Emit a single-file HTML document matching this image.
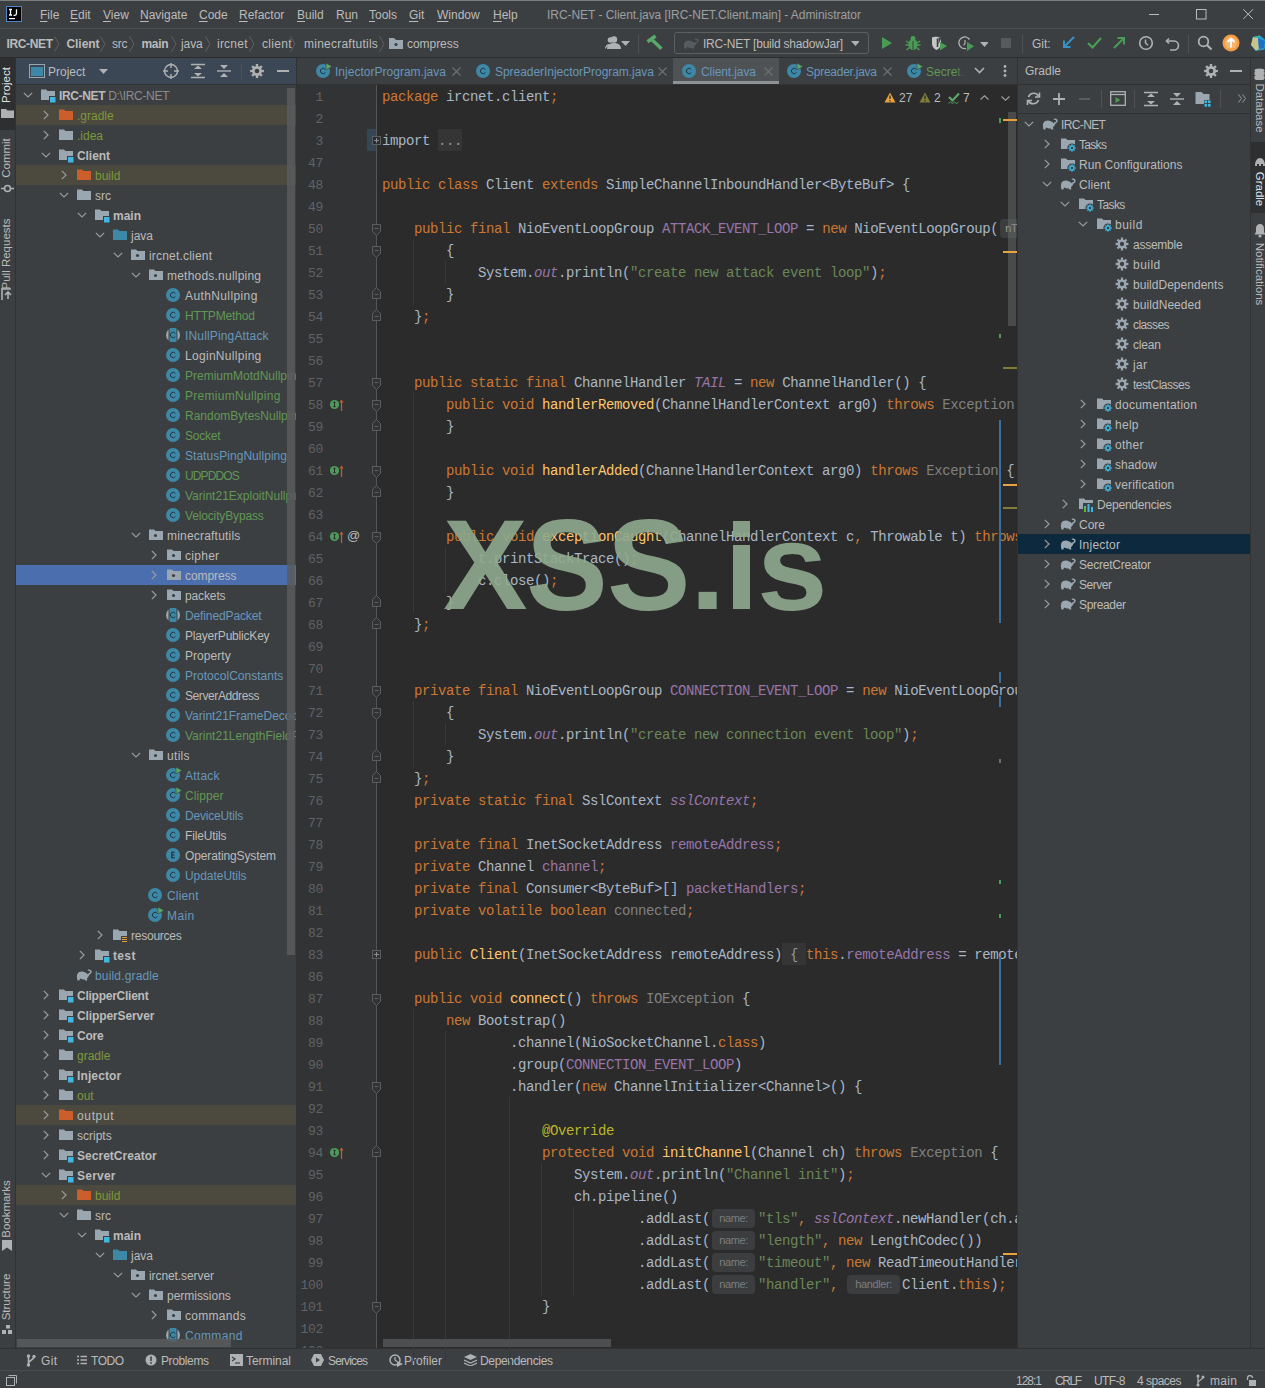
<!DOCTYPE html><html><head><meta charset="utf-8"><style>
*{margin:0;padding:0;box-sizing:border-box}
html,body{width:1265px;height:1388px;overflow:hidden;background:#3c3f41}
body{position:relative;font-family:"Liberation Sans",sans-serif;font-size:12px;color:#bbbbbb}
div,svg{position:absolute}
.t{white-space:pre;line-height:16px}
.code{font-family:"Liberation Mono",monospace;font-size:14px;letter-spacing:-0.4px;white-space:pre;line-height:22px;color:#a9b7c6;height:22px}
.k{color:#cc7832}.s{color:#6a8759}.fi{color:#9876aa;font-style:italic}.f{color:#9876aa}.m{color:#ffc66d}
.an{color:#bbb529}.g{color:#808080}.ln{font-family:"Liberation Mono",monospace;font-size:13px;letter-spacing:-0.3px;color:#606366;text-align:right;width:40px;line-height:22px}
.hint{display:inline-block;font-family:"Liberation Sans",sans-serif;font-size:11px;color:#7a7e80;background:#3b3d3f;border-radius:4px;line-height:19px;vertical-align:1px}
</style></head><body><div style="left:0px;top:0px;width:1265px;height:1px;background:#7b7c7d"></div><div style="left:0px;top:28px;width:1265px;height:1px;background:#4a4d4f"></div><div style="left:0px;top:57px;width:1265px;height:1px;background:#2b2b2b"></div><svg style="left:6px;top:6px;" width="16" height="16" viewBox="0 0 16 16"><rect x="0.5" y="0.5" width="15" height="15" fill="#000" stroke="#4a88c7"/><path d="M3 3.5h3M4.5 3.5v5.5M3 9h3M10.5 3.2v4.3c0 1.3-.7 1.8-1.8 1.8H7.5" fill="none" stroke="#fff" stroke-width="1.3"/><rect x="3" y="12" width="6" height="1.2" fill="#fff"/></svg><div class="t" style="left:40px;top:7px;"><span style="text-decoration:underline;text-underline-offset:2px">F</span>ile</div><div class="t" style="left:70px;top:7px;"><span style="text-decoration:underline;text-underline-offset:2px">E</span>dit</div><div class="t" style="left:103px;top:7px;"><span style="text-decoration:underline;text-underline-offset:2px">V</span>iew</div><div class="t" style="left:140px;top:7px;"><span style="text-decoration:underline;text-underline-offset:2px">N</span>avigate</div><div class="t" style="left:199px;top:7px;"><span style="text-decoration:underline;text-underline-offset:2px">C</span>ode</div><div class="t" style="left:239px;top:7px;"><span style="text-decoration:underline;text-underline-offset:2px">R</span>efactor</div><div class="t" style="left:297px;top:7px;"><span style="text-decoration:underline;text-underline-offset:2px">B</span>uild</div><div class="t" style="left:336px;top:7px;">R<span style="text-decoration:underline;text-underline-offset:2px">u</span>n</div><div class="t" style="left:369px;top:7px;"><span style="text-decoration:underline;text-underline-offset:2px">T</span>ools</div><div class="t" style="left:409px;top:7px;"><span style="text-decoration:underline;text-underline-offset:2px">G</span>it</div><div class="t" style="left:437px;top:7px;"><span style="text-decoration:underline;text-underline-offset:2px">W</span>indow</div><div class="t" style="left:493px;top:7px;"><span style="text-decoration:underline;text-underline-offset:2px">H</span>elp</div><div class="t" style="left:547px;top:7px;color:#9d9fa1;letter-spacing:-0.044px;">IRC-NET - Client.java [IRC-NET.Client.main] - Administrator</div><div style="left:1149px;top:14px;width:10px;height:1px;background:#bbbbbb"></div><svg style="left:1196px;top:9px;" width="11" height="11" viewBox="0 0 11 11"><rect x="0.5" y="0.5" width="9.5" height="9.5" fill="none" stroke="#bbbbbb"/></svg><svg style="left:1243px;top:9px;" width="11" height="11" viewBox="0 0 11 11"><path d="M0.3 0.3L10 10M10 0.3L0.3 10" stroke="#bbbbbb" stroke-width="1"/></svg><div class="t" style="left:6.5px;top:36px;font-weight:bold;letter-spacing:-0.362px;">IRC-NET</div><svg style="left:54px;top:36px;" width="6" height="16" viewBox="0 0 6 16"><path d="M0.5 0.5L5 8L0.5 15.5" fill="none" stroke="#5e6163" stroke-width="1"/></svg><div class="t" style="left:66.5px;top:36px;font-weight:bold;letter-spacing:-0.069px;">Client</div><svg style="left:100px;top:36px;" width="6" height="16" viewBox="0 0 6 16"><path d="M0.5 0.5L5 8L0.5 15.5" fill="none" stroke="#5e6163" stroke-width="1"/></svg><div class="t" style="left:112px;top:36px;;letter-spacing:-0.250px;">src</div><svg style="left:129px;top:36px;" width="6" height="16" viewBox="0 0 6 16"><path d="M0.5 0.5L5 8L0.5 15.5" fill="none" stroke="#5e6163" stroke-width="1"/></svg><div class="t" style="left:141.5px;top:36px;font-weight:bold;letter-spacing:-0.339px;">main</div><svg style="left:171px;top:36px;" width="6" height="16" viewBox="0 0 6 16"><path d="M0.5 0.5L5 8L0.5 15.5" fill="none" stroke="#5e6163" stroke-width="1"/></svg><div class="t" style="left:181px;top:36px;;letter-spacing:-0.105px;">java</div><svg style="left:205px;top:36px;" width="6" height="16" viewBox="0 0 6 16"><path d="M0.5 0.5L5 8L0.5 15.5" fill="none" stroke="#5e6163" stroke-width="1"/></svg><div class="t" style="left:217px;top:36px;;letter-spacing:0.231px;">ircnet</div><svg style="left:249px;top:36px;" width="6" height="16" viewBox="0 0 6 16"><path d="M0.5 0.5L5 8L0.5 15.5" fill="none" stroke="#5e6163" stroke-width="1"/></svg><div class="t" style="left:262px;top:36px;;letter-spacing:0.297px;">client</div><svg style="left:290px;top:36px;" width="6" height="16" viewBox="0 0 6 16"><path d="M0.5 0.5L5 8L0.5 15.5" fill="none" stroke="#5e6163" stroke-width="1"/></svg><div class="t" style="left:304px;top:36px;;letter-spacing:0.239px;">minecraftutils</div><svg style="left:379px;top:36px;" width="6" height="16" viewBox="0 0 6 16"><path d="M0.5 0.5L5 8L0.5 15.5" fill="none" stroke="#5e6163" stroke-width="1"/></svg><svg style="left:389px;top:37px;" width="15" height="12" viewBox="0 0 15 12"><path d="M0 1h5l2 2h7v9H0z" fill="#9aa7b0"/><circle cx="7" cy="7.5" r="1.6" fill="#3c3f41"/></svg><div class="t" style="left:407px;top:36px;;letter-spacing:-0.045px;">compress</div><svg style="left:605px;top:35px;" width="22" height="16" viewBox="0 0 22 16"><circle cx="9" cy="4.5" r="3.2" fill="#afb1b3"/><path d="M2 14c0-4 3-6 7-6s7 2 7 6z" fill="#afb1b3"/><circle cx="5.5" cy="5" r="2.8" fill="#afb1b3"/><path d="M0 14c0-3.5 2-5 5-5" fill="#afb1b3"/></svg><svg style="left:621px;top:41px;" width="9" height="5" viewBox="0 0 9 5"><path d="M0 0h9L4.5 5z" fill="#afb1b3"/></svg><div style="left:638px;top:35px;width:1px;height:18px;background:#515151"></div><svg style="left:644px;top:32px;" width="20" height="20" viewBox="0 0 20 20"><path d="M3.5 9.8L11.5 4" stroke="#59a869" stroke-width="3.6"/><path d="M8 7.8l9.5 9" stroke="#59a869" stroke-width="3.4"/></svg><div style="left:674px;top:32px;width:195px;height:22px;border:1px solid #5e6060;border-radius:3px"></div><svg style="left:683px;top:36px;" width="16" height="13" viewBox="0 0 16 13"><path d="M15.2 3.6c-.8-1.2-2.4-1.5-3.5-.7l-.3.3c.5.2 1 .5 1.3.9.4-.3.9-.2 1.2.1.4.5.2 1.1-.3 1.6-2.6 2.5-5.6-3.2-10.4-.8C1.3 6 .6 8.2 1 11l.4 1.6h2l.6-1.5c1.4.8 3 1 4.4.6l.9 .9h2l-.3-2c1.2-.8 2-2 2.3-3.3.8-.4 1.5-1 2-1.7.6-.9.5-1.8-.1-2.5z" fill="#595b5d"/><circle cx="6" cy="5.5" r=".7" fill="#3d6185"/><circle cx="8" cy="7.5" r=".7" fill="#3d6185"/><circle cx="4" cy="9" r=".7" fill="#3d6185"/><circle cx="7" cy="9.5" r=".7" fill="#3d6185"/><circle cx="10" cy="9.5" r=".7" fill="#3d6185"/></svg><div class="t" style="left:703px;top:36px;color:#bbbbbb;letter-spacing:-0.215px;">IRC-NET [build shadowJar]</div><svg style="left:851px;top:41px;" width="8" height="5" viewBox="0 0 8 5"><path d="M0 0h9L4.5 5z" fill="#afb1b3"/></svg><svg style="left:881px;top:36px;" width="12" height="14" viewBox="0 0 12 14"><path d="M1 1l10 6-10 6z" fill="#499c54"/></svg><svg style="left:905px;top:35px;" width="16" height="16" viewBox="0 0 16 16"><ellipse cx="8" cy="9.5" rx="4.5" ry="5.5" fill="#499c54"/><circle cx="8" cy="3.5" r="2.5" fill="#499c54"/><path d="M1 6l3 2M15 6l-3 2M0.5 10h3.5M15.5 10H12M1.5 15l3-2.5M14.5 15l-3-2.5" stroke="#499c54" stroke-width="1.5"/><path d="M8 6v9" stroke="#3c3f41" stroke-width="1"/></svg><svg style="left:931px;top:36px;" width="18" height="16" viewBox="0 0 18 16"><path d="M1 1.5C3 .5 7 .5 10 1.5V8c0 2.5-2 5-4.5 6C3 13 1 10.5 1 8z" fill="#c4c6c8"/><path d="M6.5 2.5V11" stroke="#3c3f41" stroke-width="1.6"/><path d="M10.5 1.5h-3v7" fill="#3c3f41"/><path d="M9 6l7 4-7 4.5z" fill="#499c54"/></svg><svg style="left:958px;top:35px;" width="18" height="17" viewBox="0 0 18 17"><path d="M11.5 4.5A5.8 5.8 0 1 0 8 13.5" fill="none" stroke="#afb1b3" stroke-width="1.4"/><path d="M7 5v3.5l-1.5 2" stroke="#afb1b3" stroke-width="1.2" fill="none"/><path d="M9 7l7 4.3-7 4.7z" fill="#499c54"/></svg><svg style="left:980px;top:42px;" width="8" height="4.5" viewBox="0 0 8 4.5"><path d="M0 0h9L4.5 5z" fill="#afb1b3"/></svg><div style="left:1001px;top:38px;width:10px;height:10px;background:#57595b"></div><div style="left:1022px;top:35px;width:1px;height:18px;background:#515151"></div><div class="t" style="left:1032px;top:36px;">Git:</div><svg style="left:1061px;top:35px;" width="15" height="15" viewBox="0 0 15 15"><path d="M13 2L3 12M3 5.5V12h6.5" fill="none" stroke="#3592c4" stroke-width="2"/></svg><svg style="left:1087px;top:36px;" width="15" height="13" viewBox="0 0 15 13"><path d="M1 7l4.5 4.5L14 2" fill="none" stroke="#499c54" stroke-width="2.2"/></svg><svg style="left:1112px;top:35px;" width="15" height="15" viewBox="0 0 15 15"><path d="M2 13L12 3M5.5 3H12v6.5" fill="none" stroke="#499c54" stroke-width="2"/></svg><svg style="left:1138px;top:35px;" width="16" height="16" viewBox="0 0 16 16"><circle cx="8" cy="8" r="6.3" fill="none" stroke="#afb1b3" stroke-width="1.6"/><path d="M7.5 4.5V8l2.5 2.2" fill="none" stroke="#afb1b3" stroke-width="1.5"/></svg><svg style="left:1165px;top:35px;" width="16" height="16" viewBox="0 0 16 16"><path d="M4 3.5L1.5 6 4 8.5" fill="none" stroke="#afb1b3" stroke-width="1.6"/><path d="M2 6h7a4.5 4.5 0 0 1 0 9H5" fill="none" stroke="#afb1b3" stroke-width="1.6"/></svg><div style="left:1188px;top:35px;width:1px;height:18px;background:#515151"></div><svg style="left:1197px;top:35px;" width="16" height="16" viewBox="0 0 16 16"><circle cx="6.5" cy="6.5" r="4.8" fill="none" stroke="#afb1b3" stroke-width="1.8"/><path d="M10 10l4.5 4.5" stroke="#afb1b3" stroke-width="2.2"/></svg><svg style="left:1222px;top:34px;" width="18" height="18" viewBox="0 0 18 18"><circle cx="9" cy="9" r="8.5" fill="#f49d45"/><circle cx="9" cy="9" r="6" fill="#f5b56f"/><path d="M9 4.5v9M5.5 8L9 4.5 12.5 8" fill="none" stroke="#fff" stroke-width="1.8"/></svg><svg style="left:1250px;top:35px;" width="16" height="16" viewBox="0 0 16 16"><path d="M3 2l7-1.5 6 5-1.5 9-9 1.5L1 10z" fill="#2a9fd6"/><path d="M3 2l5 1 1 11-3 1.5L1 10z" fill="#c8c48a"/><path d="M8 3l7 3-1 7-5 1z" fill="#1f6fc5"/><path d="M3 2l7-1.5-2 2.5z" fill="#3fb5a0"/></svg><div style="left:15px;top:58px;width:1px;height:1290px;background:#323232"></div><div style="left:0px;top:58px;width:15px;height:72px;background:#2d2f30"></div><div class="t" style="left:-2px;top:67px;width:15px;height:36px;"><div class="t" style="left:50%;top:50%;transform:translate(-50%,-50%) rotate(-90deg);color:#dfe1e5;font-size:11.5px;">Project</div></div><svg style="left:1px;top:109px;" width="13" height="9" viewBox="0 0 13 9"><path d="M0 0h5l1.5 1.5H13V9H0z" fill="#afb1b3"/></svg><div class="t" style="left:-2px;top:137px;width:15px;height:42px;"><div class="t" style="left:50%;top:50%;transform:translate(-50%,-50%) rotate(-90deg);color:#bbbbbb;font-size:11.5px;">Commit</div></div><svg style="left:1px;top:184px;" width="13" height="9" viewBox="0 0 13 9"><circle cx="6.5" cy="4.5" r="3" fill="none" stroke="#afb1b3" stroke-width="1.6"/><path d="M0 4.5h3.5M9.5 4.5H13" stroke="#afb1b3" stroke-width="1.6"/></svg><div class="t" style="left:-2px;top:221px;width:15px;height:65px;"><div class="t" style="left:50%;top:50%;transform:translate(-50%,-50%) rotate(-90deg);color:#bbbbbb;font-size:11.5px;">Pull Requests</div></div><svg style="left:1px;top:288px;" width="13" height="12" viewBox="0 0 13 12"><path d="M1 0v12M1 1h9M4 7l3-3 3 3M7 4v7" fill="none" stroke="#afb1b3" stroke-width="1.6"/></svg><div class="t" style="left:-2px;top:1180px;width:15px;height:58px;"><div class="t" style="left:50%;top:50%;transform:translate(-50%,-50%) rotate(-90deg);color:#bbbbbb;font-size:11.5px;">Bookmarks</div></div><svg style="left:2px;top:1240px;" width="10" height="11" viewBox="0 0 10 11"><path d="M0 0h10v11L5 7.5 0 11z" fill="#afb1b3"/></svg><div class="t" style="left:-2px;top:1272px;width:15px;height:50px;"><div class="t" style="left:50%;top:50%;transform:translate(-50%,-50%) rotate(-90deg);color:#bbbbbb;font-size:11.5px;">Structure</div></div><svg style="left:2px;top:1325px;" width="11" height="10" viewBox="0 0 11 10"><rect x="4" y="0" width="4" height="3.5" fill="#afb1b3"/><rect x="0" y="5" width="4" height="4" fill="#afb1b3"/><rect x="6" y="5" width="4" height="4" fill="#afb1b3"/></svg><div style="left:16px;top:58px;width:280px;height:26px;background:#3b4754"></div><div style="left:16px;top:84px;width:280px;height:1px;background:#323232"></div><div style="left:296px;top:58px;width:1px;height:1290px;background:#323232"></div><svg style="left:29px;top:63px;" width="16" height="16" viewBox="0 0 16 16"><rect x="0.5" y="1.5" width="15" height="13" fill="none" stroke="#9aa7b0"/><rect x="2" y="4" width="12" height="9" fill="#3d88a6"/></svg><div class="t" style="left:48px;top:64px;color:#bbbbbb">Project</div><svg style="left:99px;top:69px;" width="9" height="5" viewBox="0 0 9 5"><path d="M0 0h9L4.5 5z" fill="#afb1b3"/></svg><svg style="left:163px;top:63px;" width="16" height="16" viewBox="0 0 16 16"><circle cx="8" cy="8" r="6.5" fill="none" stroke="#afb1b3" stroke-width="1.4"/><path d="M8 0v5M8 11v5M0 8h5M11 8h5" stroke="#afb1b3" stroke-width="1.4"/></svg><svg style="left:190px;top:63px;" width="16" height="16" viewBox="0 0 16 16"><path d="M1 1.5h14M1 14.5h14" stroke="#afb1b3" stroke-width="1.4"/><path d="M4 6l4-3.5L12 6zM4 10l4 3.5 4-3.5z" fill="#afb1b3"/></svg><svg style="left:216px;top:63px;" width="16" height="16" viewBox="0 0 16 16"><path d="M1 8h14" stroke="#afb1b3" stroke-width="1.4"/><path d="M4 2l4 4 4-4zM4 14l4-4 4 4z" fill="#afb1b3"/></svg><div style="left:241px;top:63px;width:1px;height:16px;background:#515151"></div><svg style="left:249px;top:63px;" width="16" height="16" viewBox="0 0 16 16"><path d="M14.89 6.75 L14.89 9.25 L12.93 9.06 L12.24 10.73 L13.76 11.98 L11.98 13.76 L10.73 12.24 L9.06 12.93 L9.25 14.89 L6.75 14.89 L6.94 12.93 L5.27 12.24 L4.02 13.76 L2.24 11.98 L3.76 10.73 L3.07 9.06 L1.11 9.25 L1.11 6.75 L3.07 6.94 L3.76 5.27 L2.24 4.02 L4.02 2.24 L5.27 3.76 L6.94 3.07 L6.75 1.11 L9.25 1.11 L9.06 3.07 L10.73 3.76 L11.98 2.24 L13.76 4.02 L12.24 5.27 L12.93 6.94z" fill="#afb1b3"/><circle cx="8" cy="8" r="2.31" fill="#3c3f41"/></svg><div style="left:277px;top:70px;width:12px;height:2px;background:#afb1b3"></div><div style="left:16px;top:85px;width:280px;height:1263px;overflow:hidden"><svg style="left:7px;top:7px;" width="10" height="6" viewBox="0 0 10 6"><path d="M0.8 0.8L5 5 9.2 0.8" fill="none" stroke="#9a9da0" stroke-width="1.2"/></svg><svg style="left:24px;top:2px;" width="16" height="16" viewBox="0 0 16 16"><path d="M1 2.5h5l1.5 1.5H15v9H1z" fill="#9aa7b0"/><rect x="9" y="9" width="6.5" height="6.5" fill="#3c3f41"/><rect x="10" y="10" width="5.5" height="5.5" fill="#40b6e0"/></svg><div class="t" style="left:43px;top:3px;color:#bbbbbb;font-weight:bold;letter-spacing:-0.35px;">IRC-NET <span style="color:#8c8c8c;font-weight:normal;letter-spacing:-0.3px">D:\IRC-NET</span></div><div style="left:0px;top:20px;width:280px;height:20px;background:#4c493e"></div><svg style="left:27px;top:25px;" width="6" height="10" viewBox="0 0 6 10"><path d="M0.8 0.8L5 5 0.8 9.2" fill="none" stroke="#9a9da0" stroke-width="1.2"/></svg><svg style="left:42px;top:22px;" width="16" height="16" viewBox="0 0 16 16"><path d="M1 2.5h5l1.5 1.5H15v9H1z" fill="#cc5e2c"/></svg><div class="t" style="left:61px;top:23px;color:#7c983a;">.gradle</div><svg style="left:27px;top:45px;" width="6" height="10" viewBox="0 0 6 10"><path d="M0.8 0.8L5 5 0.8 9.2" fill="none" stroke="#9a9da0" stroke-width="1.2"/></svg><svg style="left:42px;top:42px;" width="16" height="16" viewBox="0 0 16 16"><path d="M1 2.5h5l1.5 1.5H15v9H1z" fill="#9aa7b0"/></svg><div class="t" style="left:61px;top:43px;color:#7c983a;">.idea</div><svg style="left:25px;top:67px;" width="10" height="6" viewBox="0 0 10 6"><path d="M0.8 0.8L5 5 9.2 0.8" fill="none" stroke="#9a9da0" stroke-width="1.2"/></svg><svg style="left:42px;top:62px;" width="16" height="16" viewBox="0 0 16 16"><path d="M1 2.5h5l1.5 1.5H15v9H1z" fill="#9aa7b0"/><rect x="9" y="9" width="6.5" height="6.5" fill="#3c3f41"/><rect x="10" y="10" width="5.5" height="5.5" fill="#40b6e0"/></svg><div class="t" style="left:61px;top:63px;color:#bbbbbb;font-weight:bold;letter-spacing:-0.069px;">Client</div><div style="left:0px;top:80px;width:280px;height:20px;background:#4c493e"></div><svg style="left:45px;top:85px;" width="6" height="10" viewBox="0 0 6 10"><path d="M0.8 0.8L5 5 0.8 9.2" fill="none" stroke="#9a9da0" stroke-width="1.2"/></svg><svg style="left:60px;top:82px;" width="16" height="16" viewBox="0 0 16 16"><path d="M1 2.5h5l1.5 1.5H15v9H1z" fill="#cc5e2c"/></svg><div class="t" style="left:79px;top:83px;color:#7c983a;">build</div><svg style="left:43px;top:107px;" width="10" height="6" viewBox="0 0 10 6"><path d="M0.8 0.8L5 5 9.2 0.8" fill="none" stroke="#9a9da0" stroke-width="1.2"/></svg><svg style="left:60px;top:102px;" width="16" height="16" viewBox="0 0 16 16"><path d="M1 2.5h5l1.5 1.5H15v9H1z" fill="#9aa7b0"/></svg><div class="t" style="left:79px;top:103px;color:#bbbbbb;letter-spacing:0.000px;">src</div><svg style="left:61px;top:127px;" width="10" height="6" viewBox="0 0 10 6"><path d="M0.8 0.8L5 5 9.2 0.8" fill="none" stroke="#9a9da0" stroke-width="1.2"/></svg><svg style="left:78px;top:122px;" width="16" height="16" viewBox="0 0 16 16"><path d="M1 2.5h5l1.5 1.5H15v9H1z" fill="#9aa7b0"/><rect x="9" y="9" width="6.5" height="6.5" fill="#3c3f41"/><rect x="10" y="10" width="5.5" height="5.5" fill="#40b6e0"/></svg><div class="t" style="left:97px;top:123px;color:#bbbbbb;font-weight:bold;letter-spacing:-0.005px;">main</div><svg style="left:79px;top:147px;" width="10" height="6" viewBox="0 0 10 6"><path d="M0.8 0.8L5 5 9.2 0.8" fill="none" stroke="#9a9da0" stroke-width="1.2"/></svg><svg style="left:96px;top:142px;" width="16" height="16" viewBox="0 0 16 16"><path d="M1 2.5h5l1.5 1.5H15v9H1z" fill="#3d88a6"/></svg><div class="t" style="left:115px;top:143px;color:#bbbbbb;letter-spacing:-0.005px;">java</div><svg style="left:97px;top:167px;" width="10" height="6" viewBox="0 0 10 6"><path d="M0.8 0.8L5 5 9.2 0.8" fill="none" stroke="#9a9da0" stroke-width="1.2"/></svg><svg style="left:114px;top:162px;" width="16" height="16" viewBox="0 0 16 16"><path d="M1 2.5h5l1.5 1.5H15v9H1z" fill="#9aa7b0"/><circle cx="7.5" cy="8.5" r="1.6" fill="#3c3f41"/></svg><div class="t" style="left:133px;top:163px;color:#bbbbbb;letter-spacing:0.191px;">ircnet.client</div><svg style="left:115px;top:187px;" width="10" height="6" viewBox="0 0 10 6"><path d="M0.8 0.8L5 5 9.2 0.8" fill="none" stroke="#9a9da0" stroke-width="1.2"/></svg><svg style="left:132px;top:182px;" width="16" height="16" viewBox="0 0 16 16"><path d="M1 2.5h5l1.5 1.5H15v9H1z" fill="#9aa7b0"/><circle cx="7.5" cy="8.5" r="1.6" fill="#3c3f41"/></svg><div class="t" style="left:151px;top:183px;color:#bbbbbb;letter-spacing:0.218px;">methods.nullping</div><svg style="left:150px;top:202px;" width="16" height="16" viewBox="0 0 16 16"><circle cx="7" cy="8" r="7" fill="#3d88a6"/><path d="M9.3 6.4A2.7 2.7 0 1 0 9.3 9.6" fill="none" stroke="#1f2a33" stroke-width="0.9"/></svg><div class="t" style="left:169px;top:203px;color:#bbbbbb;letter-spacing:0.387px;">AuthNullping</div><svg style="left:150px;top:222px;" width="16" height="16" viewBox="0 0 16 16"><circle cx="7" cy="8" r="7" fill="#3d88a6"/><path d="M9.3 6.4A2.7 2.7 0 1 0 9.3 9.6" fill="none" stroke="#1f2a33" stroke-width="0.9"/></svg><div class="t" style="left:169px;top:223px;color:#629755;letter-spacing:-0.151px;">HTTPMethod</div><svg style="left:150px;top:242px;" width="16" height="16" viewBox="0 0 16 16"><circle cx="7" cy="8" r="7" fill="#9aa7b0"/><rect x="2.5" y="1" width="9" height="14" fill="#3c3f41"/><rect x="3.5" y="1" width="7" height="14" rx="1" fill="#3d88a6"/><path d="M9.3 6.4A2.7 2.7 0 1 0 9.3 9.6" fill="none" stroke="#1f2a33" stroke-width="0.9"/></svg><div class="t" style="left:169px;top:243px;color:#6897bb;letter-spacing:0.159px;">INullPingAttack</div><svg style="left:150px;top:262px;" width="16" height="16" viewBox="0 0 16 16"><circle cx="7" cy="8" r="7" fill="#3d88a6"/><path d="M9.3 6.4A2.7 2.7 0 1 0 9.3 9.6" fill="none" stroke="#1f2a33" stroke-width="0.9"/></svg><div class="t" style="left:169px;top:263px;color:#bbbbbb;letter-spacing:0.297px;">LoginNullping</div><svg style="left:150px;top:282px;" width="16" height="16" viewBox="0 0 16 16"><circle cx="7" cy="8" r="7" fill="#3d88a6"/><path d="M9.3 6.4A2.7 2.7 0 1 0 9.3 9.6" fill="none" stroke="#1f2a33" stroke-width="0.9"/></svg><div class="t" style="left:169px;top:283px;color:#629755;">PremiumMotdNullping</div><svg style="left:150px;top:302px;" width="16" height="16" viewBox="0 0 16 16"><circle cx="7" cy="8" r="7" fill="#3d88a6"/><path d="M9.3 6.4A2.7 2.7 0 1 0 9.3 9.6" fill="none" stroke="#1f2a33" stroke-width="0.9"/></svg><div class="t" style="left:169px;top:303px;color:#629755;letter-spacing:0.288px;">PremiumNullping</div><svg style="left:150px;top:322px;" width="16" height="16" viewBox="0 0 16 16"><circle cx="7" cy="8" r="7" fill="#3d88a6"/><path d="M9.3 6.4A2.7 2.7 0 1 0 9.3 9.6" fill="none" stroke="#1f2a33" stroke-width="0.9"/></svg><div class="t" style="left:169px;top:323px;color:#629755;">RandomBytesNullping</div><svg style="left:150px;top:342px;" width="16" height="16" viewBox="0 0 16 16"><circle cx="7" cy="8" r="7" fill="#3d88a6"/><path d="M9.3 6.4A2.7 2.7 0 1 0 9.3 9.6" fill="none" stroke="#1f2a33" stroke-width="0.9"/></svg><div class="t" style="left:169px;top:343px;color:#629755;letter-spacing:-0.217px;">Socket</div><svg style="left:150px;top:362px;" width="16" height="16" viewBox="0 0 16 16"><circle cx="7" cy="8" r="7" fill="#3d88a6"/><path d="M9.3 6.4A2.7 2.7 0 1 0 9.3 9.6" fill="none" stroke="#1f2a33" stroke-width="0.9"/></svg><div class="t" style="left:169px;top:363px;color:#6897bb;letter-spacing:0.035px;">StatusPingNullping</div><svg style="left:150px;top:382px;" width="16" height="16" viewBox="0 0 16 16"><circle cx="7" cy="8" r="7" fill="#3d88a6"/><path d="M9.3 6.4A2.7 2.7 0 1 0 9.3 9.6" fill="none" stroke="#1f2a33" stroke-width="0.9"/></svg><div class="t" style="left:169px;top:383px;color:#629755;letter-spacing:-0.886px;">UDPDDOS</div><svg style="left:150px;top:402px;" width="16" height="16" viewBox="0 0 16 16"><circle cx="7" cy="8" r="7" fill="#3d88a6"/><path d="M9.3 6.4A2.7 2.7 0 1 0 9.3 9.6" fill="none" stroke="#1f2a33" stroke-width="0.9"/></svg><div class="t" style="left:169px;top:403px;color:#629755;">Varint21ExploitNullping</div><svg style="left:150px;top:422px;" width="16" height="16" viewBox="0 0 16 16"><circle cx="7" cy="8" r="7" fill="#3d88a6"/><path d="M9.3 6.4A2.7 2.7 0 1 0 9.3 9.6" fill="none" stroke="#1f2a33" stroke-width="0.9"/></svg><div class="t" style="left:169px;top:423px;color:#629755;letter-spacing:-0.148px;">VelocityBypass</div><svg style="left:115px;top:447px;" width="10" height="6" viewBox="0 0 10 6"><path d="M0.8 0.8L5 5 9.2 0.8" fill="none" stroke="#9a9da0" stroke-width="1.2"/></svg><svg style="left:132px;top:442px;" width="16" height="16" viewBox="0 0 16 16"><path d="M1 2.5h5l1.5 1.5H15v9H1z" fill="#9aa7b0"/><circle cx="7.5" cy="8.5" r="1.6" fill="#3c3f41"/></svg><div class="t" style="left:151px;top:443px;color:#bbbbbb;letter-spacing:0.201px;">minecraftutils</div><svg style="left:135px;top:465px;" width="6" height="10" viewBox="0 0 6 10"><path d="M0.8 0.8L5 5 0.8 9.2" fill="none" stroke="#9a9da0" stroke-width="1.2"/></svg><svg style="left:150px;top:462px;" width="16" height="16" viewBox="0 0 16 16"><path d="M1 2.5h5l1.5 1.5H15v9H1z" fill="#9aa7b0"/><circle cx="7.5" cy="8.5" r="1.6" fill="#3c3f41"/></svg><div class="t" style="left:169px;top:463px;color:#bbbbbb;letter-spacing:0.283px;">cipher</div><div style="left:0px;top:480px;width:280px;height:20px;background:#4b6eaf"></div><svg style="left:135px;top:485px;" width="6" height="10" viewBox="0 0 6 10"><path d="M0.8 0.8L5 5 0.8 9.2" fill="none" stroke="#9a9da0" stroke-width="1.2"/></svg><svg style="left:150px;top:482px;" width="16" height="16" viewBox="0 0 16 16"><path d="M1 2.5h5l1.5 1.5H15v9H1z" fill="#9aa7b0"/><circle cx="7.5" cy="8.5" r="1.6" fill="#3c3f41"/></svg><div class="t" style="left:169px;top:483px;color:#bbbbbb;letter-spacing:-0.088px;">compress</div><svg style="left:135px;top:505px;" width="6" height="10" viewBox="0 0 6 10"><path d="M0.8 0.8L5 5 0.8 9.2" fill="none" stroke="#9a9da0" stroke-width="1.2"/></svg><svg style="left:150px;top:502px;" width="16" height="16" viewBox="0 0 16 16"><path d="M1 2.5h5l1.5 1.5H15v9H1z" fill="#9aa7b0"/><circle cx="7.5" cy="8.5" r="1.6" fill="#3c3f41"/></svg><div class="t" style="left:169px;top:503px;color:#bbbbbb;letter-spacing:-0.127px;">packets</div><svg style="left:150px;top:522px;" width="16" height="16" viewBox="0 0 16 16"><circle cx="7" cy="8" r="7" fill="#9aa7b0"/><rect x="2.5" y="1" width="9" height="14" fill="#3c3f41"/><rect x="3.5" y="1" width="7" height="14" rx="1" fill="#3d88a6"/><path d="M9.3 6.4A2.7 2.7 0 1 0 9.3 9.6" fill="none" stroke="#1f2a33" stroke-width="0.9"/></svg><div class="t" style="left:169px;top:523px;color:#6897bb;letter-spacing:-0.121px;">DefinedPacket</div><svg style="left:150px;top:542px;" width="16" height="16" viewBox="0 0 16 16"><circle cx="7" cy="8" r="7" fill="#3d88a6"/><path d="M9.3 6.4A2.7 2.7 0 1 0 9.3 9.6" fill="none" stroke="#1f2a33" stroke-width="0.9"/></svg><div class="t" style="left:169px;top:543px;color:#bbbbbb;letter-spacing:-0.198px;">PlayerPublicKey</div><svg style="left:150px;top:562px;" width="16" height="16" viewBox="0 0 16 16"><circle cx="7" cy="8" r="7" fill="#3d88a6"/><path d="M9.3 6.4A2.7 2.7 0 1 0 9.3 9.6" fill="none" stroke="#1f2a33" stroke-width="0.9"/></svg><div class="t" style="left:169px;top:563px;color:#bbbbbb;letter-spacing:0.049px;">Property</div><svg style="left:150px;top:582px;" width="16" height="16" viewBox="0 0 16 16"><circle cx="7" cy="8" r="7" fill="#3d88a6"/><path d="M9.3 6.4A2.7 2.7 0 1 0 9.3 9.6" fill="none" stroke="#1f2a33" stroke-width="0.9"/></svg><div class="t" style="left:169px;top:583px;color:#6897bb;letter-spacing:0.015px;">ProtocolConstants</div><svg style="left:150px;top:602px;" width="16" height="16" viewBox="0 0 16 16"><circle cx="7" cy="8" r="7" fill="#3d88a6"/><path d="M9.3 6.4A2.7 2.7 0 1 0 9.3 9.6" fill="none" stroke="#1f2a33" stroke-width="0.9"/></svg><div class="t" style="left:169px;top:603px;color:#bbbbbb;letter-spacing:-0.406px;">ServerAddress</div><svg style="left:150px;top:622px;" width="16" height="16" viewBox="0 0 16 16"><circle cx="7" cy="8" r="7" fill="#3d88a6"/><path d="M9.3 6.4A2.7 2.7 0 1 0 9.3 9.6" fill="none" stroke="#1f2a33" stroke-width="0.9"/></svg><div class="t" style="left:169px;top:623px;color:#6897bb;">Varint21FrameDecoder</div><svg style="left:150px;top:642px;" width="16" height="16" viewBox="0 0 16 16"><circle cx="7" cy="8" r="7" fill="#3d88a6"/><path d="M9.3 6.4A2.7 2.7 0 1 0 9.3 9.6" fill="none" stroke="#1f2a33" stroke-width="0.9"/></svg><div class="t" style="left:169px;top:643px;color:#629755;">Varint21LengthFieldPrepender</div><svg style="left:115px;top:667px;" width="10" height="6" viewBox="0 0 10 6"><path d="M0.8 0.8L5 5 9.2 0.8" fill="none" stroke="#9a9da0" stroke-width="1.2"/></svg><svg style="left:132px;top:662px;" width="16" height="16" viewBox="0 0 16 16"><path d="M1 2.5h5l1.5 1.5H15v9H1z" fill="#9aa7b0"/><circle cx="7.5" cy="8.5" r="1.6" fill="#3c3f41"/></svg><div class="t" style="left:151px;top:663px;color:#bbbbbb;letter-spacing:0.314px;">utils</div><svg style="left:150px;top:682px;" width="16" height="16" viewBox="0 0 16 16"><circle cx="7" cy="8" r="7" fill="#3d88a6"/><path d="M9.3 6.4A2.7 2.7 0 1 0 9.3 9.6" fill="none" stroke="#1f2a33" stroke-width="0.9"/><path d="M10 0l6 3.5-6 3.5z" fill="#59a869" stroke="#3c3f41" stroke-width="0.6"/></svg><div class="t" style="left:169px;top:683px;color:#6897bb;letter-spacing:0.248px;">Attack</div><svg style="left:150px;top:702px;" width="16" height="16" viewBox="0 0 16 16"><circle cx="7" cy="8" r="7" fill="#3d88a6"/><path d="M9.3 6.4A2.7 2.7 0 1 0 9.3 9.6" fill="none" stroke="#1f2a33" stroke-width="0.9"/><path d="M10 0l6 3.5-6 3.5z" fill="#59a869" stroke="#3c3f41" stroke-width="0.6"/></svg><div class="t" style="left:169px;top:703px;color:#629755;letter-spacing:0.081px;">Clipper</div><svg style="left:150px;top:722px;" width="16" height="16" viewBox="0 0 16 16"><circle cx="7" cy="8" r="7" fill="#3d88a6"/><path d="M9.3 6.4A2.7 2.7 0 1 0 9.3 9.6" fill="none" stroke="#1f2a33" stroke-width="0.9"/></svg><div class="t" style="left:169px;top:723px;color:#6897bb;letter-spacing:-0.182px;">DeviceUtils</div><svg style="left:150px;top:742px;" width="16" height="16" viewBox="0 0 16 16"><circle cx="7" cy="8" r="7" fill="#3d88a6"/><path d="M9.3 6.4A2.7 2.7 0 1 0 9.3 9.6" fill="none" stroke="#1f2a33" stroke-width="0.9"/></svg><div class="t" style="left:169px;top:743px;color:#bbbbbb;letter-spacing:-0.134px;">FileUtils</div><svg style="left:150px;top:762px;" width="16" height="16" viewBox="0 0 16 16"><circle cx="7" cy="8" r="7" fill="#3d88a6"/><path d="M8.8 5.2H5.8v5.6h3M5.8 8h2.6" fill="none" stroke="#23272e" stroke-width="1.1"/></svg><div class="t" style="left:169px;top:763px;color:#bbbbbb;letter-spacing:-0.123px;">OperatingSystem</div><svg style="left:150px;top:782px;" width="16" height="16" viewBox="0 0 16 16"><circle cx="7" cy="8" r="7" fill="#3d88a6"/><path d="M9.3 6.4A2.7 2.7 0 1 0 9.3 9.6" fill="none" stroke="#1f2a33" stroke-width="0.9"/></svg><div class="t" style="left:169px;top:783px;color:#6897bb;letter-spacing:-0.053px;">UpdateUtils</div><svg style="left:132px;top:802px;" width="16" height="16" viewBox="0 0 16 16"><circle cx="7" cy="8" r="7" fill="#3d88a6"/><path d="M9.3 6.4A2.7 2.7 0 1 0 9.3 9.6" fill="none" stroke="#1f2a33" stroke-width="0.9"/></svg><div class="t" style="left:151px;top:803px;color:#6897bb;letter-spacing:0.163px;">Client</div><svg style="left:132px;top:822px;" width="16" height="16" viewBox="0 0 16 16"><circle cx="7" cy="8" r="7" fill="#3d88a6"/><path d="M9.3 6.4A2.7 2.7 0 1 0 9.3 9.6" fill="none" stroke="#1f2a33" stroke-width="0.9"/><path d="M10 0l6 3.5-6 3.5z" fill="#59a869" stroke="#3c3f41" stroke-width="0.6"/></svg><div class="t" style="left:151px;top:823px;color:#6897bb;letter-spacing:0.395px;">Main</div><svg style="left:81px;top:845px;" width="6" height="10" viewBox="0 0 6 10"><path d="M0.8 0.8L5 5 0.8 9.2" fill="none" stroke="#9a9da0" stroke-width="1.2"/></svg><svg style="left:96px;top:842px;" width="16" height="16" viewBox="0 0 16 16"><path d="M1 2.5h5l1.5 1.5H15v9H1z" fill="#9aa7b0"/><rect x="9" y="9" width="7" height="7" fill="#3c3f41"/><path d="M10 10.5h5M10 12.5h5M10 14.5h5" stroke="#e39e3c" stroke-width="1"/></svg><div class="t" style="left:115px;top:843px;color:#bbbbbb;letter-spacing:-0.236px;">resources</div><svg style="left:63px;top:865px;" width="6" height="10" viewBox="0 0 6 10"><path d="M0.8 0.8L5 5 0.8 9.2" fill="none" stroke="#9a9da0" stroke-width="1.2"/></svg><svg style="left:78px;top:862px;" width="16" height="16" viewBox="0 0 16 16"><path d="M1 2.5h5l1.5 1.5H15v9H1z" fill="#9aa7b0"/><rect x="9" y="9" width="6.5" height="6.5" fill="#3c3f41"/><rect x="10" y="10" width="5.5" height="5.5" fill="#40b6e0"/></svg><div class="t" style="left:97px;top:863px;color:#bbbbbb;font-weight:bold;letter-spacing:0.352px;">test</div><svg style="left:60px;top:882px;" width="16" height="16" viewBox="0 0 16 16"><path d="M15.2 3.6c-.8-1.2-2.4-1.5-3.5-.7l-.3.3c.5.2 1 .5 1.3.9.4-.3.9-.2 1.2.1.4.5.2 1.1-.3 1.6-2.6 2.5-5.6-3.2-10.4-.8C1.3 6 .6 8.2 1 11l.4 2.6h2l.6-2c1.4.8 3 1 4.4.6l.9 1.4h2l-.3-2.5c1.2-.8 2-2 2.3-3.3.8-.4 1.5-1 2-1.7.6-.9.5-1.8-.1-2.5z" fill="#9aa7b0"/><circle cx="11.6" cy="6.6" r=".6" fill="#3c3f41"/></svg><div class="t" style="left:79px;top:883px;color:#6897bb;letter-spacing:0.159px;">build.gradle</div><svg style="left:27px;top:905px;" width="6" height="10" viewBox="0 0 6 10"><path d="M0.8 0.8L5 5 0.8 9.2" fill="none" stroke="#9a9da0" stroke-width="1.2"/></svg><svg style="left:42px;top:902px;" width="16" height="16" viewBox="0 0 16 16"><path d="M1 2.5h5l1.5 1.5H15v9H1z" fill="#9aa7b0"/><rect x="9" y="9" width="6.5" height="6.5" fill="#3c3f41"/><rect x="10" y="10" width="5.5" height="5.5" fill="#40b6e0"/></svg><div class="t" style="left:61px;top:903px;color:#bbbbbb;font-weight:bold;letter-spacing:-0.248px;">ClipperClient</div><svg style="left:27px;top:925px;" width="6" height="10" viewBox="0 0 6 10"><path d="M0.8 0.8L5 5 0.8 9.2" fill="none" stroke="#9a9da0" stroke-width="1.2"/></svg><svg style="left:42px;top:922px;" width="16" height="16" viewBox="0 0 16 16"><path d="M1 2.5h5l1.5 1.5H15v9H1z" fill="#9aa7b0"/><rect x="9" y="9" width="6.5" height="6.5" fill="#3c3f41"/><rect x="10" y="10" width="5.5" height="5.5" fill="#40b6e0"/></svg><div class="t" style="left:61px;top:923px;color:#bbbbbb;font-weight:bold;letter-spacing:-0.109px;">ClipperServer</div><svg style="left:27px;top:945px;" width="6" height="10" viewBox="0 0 6 10"><path d="M0.8 0.8L5 5 0.8 9.2" fill="none" stroke="#9a9da0" stroke-width="1.2"/></svg><svg style="left:42px;top:942px;" width="16" height="16" viewBox="0 0 16 16"><path d="M1 2.5h5l1.5 1.5H15v9H1z" fill="#9aa7b0"/><rect x="9" y="9" width="6.5" height="6.5" fill="#3c3f41"/><rect x="10" y="10" width="5.5" height="5.5" fill="#40b6e0"/></svg><div class="t" style="left:61px;top:943px;color:#bbbbbb;font-weight:bold;letter-spacing:-0.215px;">Core</div><svg style="left:27px;top:965px;" width="6" height="10" viewBox="0 0 6 10"><path d="M0.8 0.8L5 5 0.8 9.2" fill="none" stroke="#9a9da0" stroke-width="1.2"/></svg><svg style="left:42px;top:962px;" width="16" height="16" viewBox="0 0 16 16"><path d="M1 2.5h5l1.5 1.5H15v9H1z" fill="#9aa7b0"/></svg><div class="t" style="left:61px;top:963px;color:#7c983a;">gradle</div><svg style="left:27px;top:985px;" width="6" height="10" viewBox="0 0 6 10"><path d="M0.8 0.8L5 5 0.8 9.2" fill="none" stroke="#9a9da0" stroke-width="1.2"/></svg><svg style="left:42px;top:982px;" width="16" height="16" viewBox="0 0 16 16"><path d="M1 2.5h5l1.5 1.5H15v9H1z" fill="#9aa7b0"/><rect x="9" y="9" width="6.5" height="6.5" fill="#3c3f41"/><rect x="10" y="10" width="5.5" height="5.5" fill="#40b6e0"/></svg><div class="t" style="left:61px;top:983px;color:#bbbbbb;font-weight:bold;letter-spacing:0.122px;">Injector</div><svg style="left:27px;top:1005px;" width="6" height="10" viewBox="0 0 6 10"><path d="M0.8 0.8L5 5 0.8 9.2" fill="none" stroke="#9a9da0" stroke-width="1.2"/></svg><svg style="left:42px;top:1002px;" width="16" height="16" viewBox="0 0 16 16"><path d="M1 2.5h5l1.5 1.5H15v9H1z" fill="#9aa7b0"/></svg><div class="t" style="left:61px;top:1003px;color:#7c983a;">out</div><div style="left:0px;top:1020px;width:280px;height:20px;background:#4c493e"></div><svg style="left:27px;top:1025px;" width="6" height="10" viewBox="0 0 6 10"><path d="M0.8 0.8L5 5 0.8 9.2" fill="none" stroke="#9a9da0" stroke-width="1.2"/></svg><svg style="left:42px;top:1022px;" width="16" height="16" viewBox="0 0 16 16"><path d="M1 2.5h5l1.5 1.5H15v9H1z" fill="#cc5e2c"/></svg><div class="t" style="left:61px;top:1023px;color:#bbbbbb;letter-spacing:0.645px;">output</div><svg style="left:27px;top:1045px;" width="6" height="10" viewBox="0 0 6 10"><path d="M0.8 0.8L5 5 0.8 9.2" fill="none" stroke="#9a9da0" stroke-width="1.2"/></svg><svg style="left:42px;top:1042px;" width="16" height="16" viewBox="0 0 16 16"><path d="M1 2.5h5l1.5 1.5H15v9H1z" fill="#9aa7b0"/></svg><div class="t" style="left:61px;top:1043px;color:#bbbbbb;letter-spacing:0.005px;">scripts</div><svg style="left:27px;top:1065px;" width="6" height="10" viewBox="0 0 6 10"><path d="M0.8 0.8L5 5 0.8 9.2" fill="none" stroke="#9a9da0" stroke-width="1.2"/></svg><svg style="left:42px;top:1062px;" width="16" height="16" viewBox="0 0 16 16"><path d="M1 2.5h5l1.5 1.5H15v9H1z" fill="#9aa7b0"/><rect x="9" y="9" width="6.5" height="6.5" fill="#3c3f41"/><rect x="10" y="10" width="5.5" height="5.5" fill="#40b6e0"/></svg><div class="t" style="left:61px;top:1063px;color:#bbbbbb;font-weight:bold;letter-spacing:0.027px;">SecretCreator</div><svg style="left:25px;top:1087px;" width="10" height="6" viewBox="0 0 10 6"><path d="M0.8 0.8L5 5 9.2 0.8" fill="none" stroke="#9a9da0" stroke-width="1.2"/></svg><svg style="left:42px;top:1082px;" width="16" height="16" viewBox="0 0 16 16"><path d="M1 2.5h5l1.5 1.5H15v9H1z" fill="#9aa7b0"/><rect x="9" y="9" width="6.5" height="6.5" fill="#3c3f41"/><rect x="10" y="10" width="5.5" height="5.5" fill="#40b6e0"/></svg><div class="t" style="left:61px;top:1083px;color:#bbbbbb;font-weight:bold;letter-spacing:0.225px;">Server</div><div style="left:0px;top:1100px;width:280px;height:20px;background:#4c493e"></div><svg style="left:45px;top:1105px;" width="6" height="10" viewBox="0 0 6 10"><path d="M0.8 0.8L5 5 0.8 9.2" fill="none" stroke="#9a9da0" stroke-width="1.2"/></svg><svg style="left:60px;top:1102px;" width="16" height="16" viewBox="0 0 16 16"><path d="M1 2.5h5l1.5 1.5H15v9H1z" fill="#cc5e2c"/></svg><div class="t" style="left:79px;top:1103px;color:#7c983a;">build</div><svg style="left:43px;top:1127px;" width="10" height="6" viewBox="0 0 10 6"><path d="M0.8 0.8L5 5 9.2 0.8" fill="none" stroke="#9a9da0" stroke-width="1.2"/></svg><svg style="left:60px;top:1122px;" width="16" height="16" viewBox="0 0 16 16"><path d="M1 2.5h5l1.5 1.5H15v9H1z" fill="#9aa7b0"/></svg><div class="t" style="left:79px;top:1123px;color:#bbbbbb;letter-spacing:0.000px;">src</div><svg style="left:61px;top:1147px;" width="10" height="6" viewBox="0 0 10 6"><path d="M0.8 0.8L5 5 9.2 0.8" fill="none" stroke="#9a9da0" stroke-width="1.2"/></svg><svg style="left:78px;top:1142px;" width="16" height="16" viewBox="0 0 16 16"><path d="M1 2.5h5l1.5 1.5H15v9H1z" fill="#9aa7b0"/><rect x="9" y="9" width="6.5" height="6.5" fill="#3c3f41"/><rect x="10" y="10" width="5.5" height="5.5" fill="#40b6e0"/></svg><div class="t" style="left:97px;top:1143px;color:#bbbbbb;font-weight:bold;letter-spacing:-0.005px;">main</div><svg style="left:79px;top:1167px;" width="10" height="6" viewBox="0 0 10 6"><path d="M0.8 0.8L5 5 9.2 0.8" fill="none" stroke="#9a9da0" stroke-width="1.2"/></svg><svg style="left:96px;top:1162px;" width="16" height="16" viewBox="0 0 16 16"><path d="M1 2.5h5l1.5 1.5H15v9H1z" fill="#3d88a6"/></svg><div class="t" style="left:115px;top:1163px;color:#bbbbbb;letter-spacing:-0.005px;">java</div><svg style="left:97px;top:1187px;" width="10" height="6" viewBox="0 0 10 6"><path d="M0.8 0.8L5 5 9.2 0.8" fill="none" stroke="#9a9da0" stroke-width="1.2"/></svg><svg style="left:114px;top:1182px;" width="16" height="16" viewBox="0 0 16 16"><path d="M1 2.5h5l1.5 1.5H15v9H1z" fill="#9aa7b0"/><circle cx="7.5" cy="8.5" r="1.6" fill="#3c3f41"/></svg><div class="t" style="left:133px;top:1183px;color:#bbbbbb;letter-spacing:-0.086px;">ircnet.server</div><svg style="left:115px;top:1207px;" width="10" height="6" viewBox="0 0 10 6"><path d="M0.8 0.8L5 5 9.2 0.8" fill="none" stroke="#9a9da0" stroke-width="1.2"/></svg><svg style="left:132px;top:1202px;" width="16" height="16" viewBox="0 0 16 16"><path d="M1 2.5h5l1.5 1.5H15v9H1z" fill="#9aa7b0"/><circle cx="7.5" cy="8.5" r="1.6" fill="#3c3f41"/></svg><div class="t" style="left:151px;top:1203px;color:#bbbbbb;letter-spacing:-0.023px;">permissions</div><svg style="left:135px;top:1225px;" width="6" height="10" viewBox="0 0 6 10"><path d="M0.8 0.8L5 5 0.8 9.2" fill="none" stroke="#9a9da0" stroke-width="1.2"/></svg><svg style="left:150px;top:1222px;" width="16" height="16" viewBox="0 0 16 16"><path d="M1 2.5h5l1.5 1.5H15v9H1z" fill="#9aa7b0"/><circle cx="7.5" cy="8.5" r="1.6" fill="#3c3f41"/></svg><div class="t" style="left:169px;top:1223px;color:#bbbbbb;letter-spacing:0.288px;">commands</div><svg style="left:150px;top:1242px;" width="16" height="16" viewBox="0 0 16 16"><circle cx="7" cy="8" r="7" fill="#9aa7b0"/><rect x="2.5" y="1" width="9" height="14" fill="#3c3f41"/><rect x="3.5" y="1" width="7" height="14" rx="1" fill="#3d88a6"/><path d="M9.3 6.4A2.7 2.7 0 1 0 9.3 9.6" fill="none" stroke="#1f2a33" stroke-width="0.9"/></svg><div class="t" style="left:169px;top:1243px;color:#6897bb;letter-spacing:0.340px;">Command</div></div><div style="left:287px;top:88px;width:8px;height:867px;background:#595b5d;border-radius:0px;opacity:0.85"></div><div style="left:17px;top:1339px;width:214px;height:8px;background:#595b5d;opacity:0.85"></div><div style="left:297px;top:58px;width:720px;height:26px;background:#3c3f41"></div><div style="left:297px;top:84px;width:720px;height:1px;background:#323232"></div><div style="left:1017px;top:58px;width:1px;height:1290px;background:#323232"></div><div style="left:673px;top:58px;width:106px;height:26px;background:#4e5254"></div><div style="left:673px;top:81px;width:106px;height:3px;background:#8d9296"></div><svg style="left:316px;top:63px;" width="16" height="16" viewBox="0 0 16 16"><circle cx="7" cy="8" r="7" fill="#3d88a6"/><path d="M9.3 6.4A2.7 2.7 0 1 0 9.3 9.6" fill="none" stroke="#1f2a33" stroke-width="0.9"/><path d="M10 0l6 3.5-6 3.5z" fill="#59a869" stroke="#3c3f41" stroke-width="0.6"/></svg><div class="t" style="left:335px;top:64px;color:#6897bb;letter-spacing:0.015px;">InjectorProgram.java</div><svg style="left:452px;top:67px;" width="9" height="9" viewBox="0 0 9 9"><path d="M0.5 0.5l8 8M8.5 0.5l-8 8" stroke="#6e7173" stroke-width="1.1"/></svg><svg style="left:476px;top:63px;" width="16" height="16" viewBox="0 0 16 16"><circle cx="7" cy="8" r="7" fill="#3d88a6"/><path d="M9.3 6.4A2.7 2.7 0 1 0 9.3 9.6" fill="none" stroke="#1f2a33" stroke-width="0.9"/></svg><div class="t" style="left:495px;top:64px;color:#6897bb;letter-spacing:-0.040px;">SpreaderInjectorProgram.java</div><svg style="left:658px;top:67px;" width="9" height="9" viewBox="0 0 9 9"><path d="M0.5 0.5l8 8M8.5 0.5l-8 8" stroke="#6e7173" stroke-width="1.1"/></svg><svg style="left:682px;top:63px;" width="16" height="16" viewBox="0 0 16 16"><circle cx="7" cy="8" r="7" fill="#3d88a6"/><path d="M9.3 6.4A2.7 2.7 0 1 0 9.3 9.6" fill="none" stroke="#1f2a33" stroke-width="0.9"/></svg><div class="t" style="left:701px;top:64px;color:#6897bb;letter-spacing:-0.103px;">Client.java</div><svg style="left:764px;top:67px;" width="9" height="9" viewBox="0 0 9 9"><path d="M0.5 0.5l8 8M8.5 0.5l-8 8" stroke="#6e7173" stroke-width="1.1"/></svg><svg style="left:787px;top:63px;" width="16" height="16" viewBox="0 0 16 16"><circle cx="7" cy="8" r="7" fill="#3d88a6"/><path d="M9.3 6.4A2.7 2.7 0 1 0 9.3 9.6" fill="none" stroke="#1f2a33" stroke-width="0.9"/><path d="M10 0l6 3.5-6 3.5z" fill="#59a869" stroke="#3c3f41" stroke-width="0.6"/></svg><div class="t" style="left:806px;top:64px;color:#6897bb;letter-spacing:-0.255px;">Spreader.java</div><svg style="left:883px;top:67px;" width="9" height="9" viewBox="0 0 9 9"><path d="M0.5 0.5l8 8M8.5 0.5l-8 8" stroke="#6e7173" stroke-width="1.1"/></svg><svg style="left:907px;top:63px;" width="16" height="16" viewBox="0 0 16 16"><circle cx="7" cy="8" r="7" fill="#3d88a6"/><path d="M9.3 6.4A2.7 2.7 0 1 0 9.3 9.6" fill="none" stroke="#1f2a33" stroke-width="0.9"/><path d="M10 0l6 3.5-6 3.5z" fill="#59a869" stroke="#3c3f41" stroke-width="0.6"/></svg><div class="t" style="left:926px;top:64px;color:#629755">Secret.</div><div style="left:955px;top:58px;width:12px;height:26px;background:linear-gradient(to right,rgba(60,63,65,0),#3c3f41)"></div><svg style="left:974px;top:67px;" width="11" height="7" viewBox="0 0 11 7"><path d="M1 1l4.5 4.5L10 1" fill="none" stroke="#afb1b3" stroke-width="1.6"/></svg><svg style="left:1003px;top:64px;" width="4" height="14" viewBox="0 0 4 14"><circle cx="2" cy="2.5" r="1.4" fill="#afb1b3"/><circle cx="2" cy="7" r="1.4" fill="#afb1b3"/><circle cx="2" cy="11.5" r="1.4" fill="#afb1b3"/></svg><div style="left:297px;top:85px;width:80px;height:1263px;background:#313335"></div><div style="left:377px;top:85px;width:640px;height:1263px;background:#2b2b2b"></div><div style="left:376px;top:85px;width:1px;height:1263px;background:#555555"></div><div style="left:297px;top:85px;width:720px;height:1263px;overflow:hidden"><div class="ln" style="left:-14px;top:1.5px">1</div><div class="code" style="left:85px;top:1px"><span class="k">package</span> ircnet.client<span class="k">;</span></div><div class="ln" style="left:-14px;top:23.5px">2</div><div class="code" style="left:85px;top:23px"></div><div class="ln" style="left:-14px;top:45.5px">3</div><div class="code" style="left:85px;top:45px">import ...</div><div class="ln" style="left:-14px;top:67.5px">47</div><div class="code" style="left:85px;top:67px"></div><div class="ln" style="left:-14px;top:89.5px">48</div><div class="code" style="left:85px;top:89px"><span class="k">public class </span>Client <span class="k">extends </span>SimpleChannelInboundHandler&lt;ByteBuf&gt; {</div><div class="ln" style="left:-14px;top:111.5px">49</div><div class="code" style="left:85px;top:111px"></div><div class="ln" style="left:-14px;top:133.5px">50</div><div class="code" style="left:85px;top:133px">    <span class="k">public final </span>NioEventLoopGroup <span class="f">ATTACK_EVENT_LOOP</span> = <span class="k">new </span>NioEventLoopGroup(<span class="hint" style="width:60px;padding-left:5px;margin-left:2px;color:#a0a0a0">nThreads:</span></div><div class="ln" style="left:-14px;top:155.5px">51</div><div class="code" style="left:85px;top:155px">        {</div><div class="ln" style="left:-14px;top:177.5px">52</div><div class="code" style="left:85px;top:177px">            System.<span class="fi">out</span>.println(<span class="s">"create new attack event loop"</span>)<span class="k">;</span></div><div class="ln" style="left:-14px;top:199.5px">53</div><div class="code" style="left:85px;top:199px">        }</div><div class="ln" style="left:-14px;top:221.5px">54</div><div class="code" style="left:85px;top:221px">    }<span class="k">;</span></div><div class="ln" style="left:-14px;top:243.5px">55</div><div class="code" style="left:85px;top:243px"></div><div class="ln" style="left:-14px;top:265.5px">56</div><div class="code" style="left:85px;top:265px"></div><div class="ln" style="left:-14px;top:287.5px">57</div><div class="code" style="left:85px;top:287px">    <span class="k">public static final </span>ChannelHandler <span class="fi">TAIL</span> = <span class="k">new </span>ChannelHandler() {</div><div class="ln" style="left:-14px;top:309.5px">58</div><div class="code" style="left:85px;top:309px">        <span class="k">public void </span><span class="m">handlerRemoved</span>(ChannelHandlerContext arg0) <span class="k">throws </span><span class="g">Exception</span> {</div><div class="ln" style="left:-14px;top:331.5px">59</div><div class="code" style="left:85px;top:331px">        }</div><div class="ln" style="left:-14px;top:353.5px">60</div><div class="code" style="left:85px;top:353px"></div><div class="ln" style="left:-14px;top:375.5px">61</div><div class="code" style="left:85px;top:375px">        <span class="k">public void </span><span class="m">handlerAdded</span>(ChannelHandlerContext arg0) <span class="k">throws </span><span class="g">Exception</span> {</div><div class="ln" style="left:-14px;top:397.5px">62</div><div class="code" style="left:85px;top:397px">        }</div><div class="ln" style="left:-14px;top:419.5px">63</div><div class="code" style="left:85px;top:419px"></div><div class="ln" style="left:-14px;top:441.5px">64</div><div class="code" style="left:85px;top:441px">        <span class="k">public void </span><span class="m">exceptionCaught</span>(ChannelHandlerContext c<span class="k">,</span> Throwable t) <span class="k">throws </span><span class="g">Exception</span> {</div><div class="ln" style="left:-14px;top:463.5px">65</div><div class="code" style="left:85px;top:463px">            t.printStackTrace()<span class="k">;</span></div><div class="ln" style="left:-14px;top:485.5px">66</div><div class="code" style="left:85px;top:485px">            c.close()<span class="k">;</span></div><div class="ln" style="left:-14px;top:507.5px">67</div><div class="code" style="left:85px;top:507px">        }</div><div class="ln" style="left:-14px;top:529.5px">68</div><div class="code" style="left:85px;top:529px">    }<span class="k">;</span></div><div class="ln" style="left:-14px;top:551.5px">69</div><div class="code" style="left:85px;top:551px"></div><div class="ln" style="left:-14px;top:573.5px">70</div><div class="code" style="left:85px;top:573px"></div><div class="ln" style="left:-14px;top:595.5px">71</div><div class="code" style="left:85px;top:595px">    <span class="k">private final </span>NioEventLoopGroup <span class="f">CONNECTION_EVENT_LOOP</span> = <span class="k">new </span>NioEventLoopGroup(</div><div class="ln" style="left:-14px;top:617.5px">72</div><div class="code" style="left:85px;top:617px">        {</div><div class="ln" style="left:-14px;top:639.5px">73</div><div class="code" style="left:85px;top:639px">            System.<span class="fi">out</span>.println(<span class="s">"create new connection event loop"</span>)<span class="k">;</span></div><div class="ln" style="left:-14px;top:661.5px">74</div><div class="code" style="left:85px;top:661px">        }</div><div class="ln" style="left:-14px;top:683.5px">75</div><div class="code" style="left:85px;top:683px">    }<span class="k">;</span></div><div class="ln" style="left:-14px;top:705.5px">76</div><div class="code" style="left:85px;top:705px">    <span class="k">private static final </span>SslContext <span class="fi">sslContext</span><span class="k">;</span></div><div class="ln" style="left:-14px;top:727.5px">77</div><div class="code" style="left:85px;top:727px"></div><div class="ln" style="left:-14px;top:749.5px">78</div><div class="code" style="left:85px;top:749px">    <span class="k">private final </span>InetSocketAddress <span class="f">remoteAddress</span><span class="k">;</span></div><div class="ln" style="left:-14px;top:771.5px">79</div><div class="code" style="left:85px;top:771px">    <span class="k">private </span>Channel <span class="f">channel</span><span class="k">;</span></div><div class="ln" style="left:-14px;top:793.5px">80</div><div class="code" style="left:85px;top:793px">    <span class="k">private final </span>Consumer&lt;ByteBuf&gt;[] <span class="f">packetHandlers</span><span class="k">;</span></div><div class="ln" style="left:-14px;top:815.5px">81</div><div class="code" style="left:85px;top:815px">    <span class="k">private volatile boolean </span><span class="g">connected</span><span class="k">;</span></div><div class="ln" style="left:-14px;top:837.5px">82</div><div class="code" style="left:85px;top:837px"></div><div class="ln" style="left:-14px;top:859.5px">83</div><div class="code" style="left:85px;top:859px">    <span class="k">public </span><span class="m">Client</span>(InetSocketAddress remoteAddress) { <span class="k">this</span>.<span class="f">remoteAddress</span> = remoteAddress<span class="k">;</span></div><div class="ln" style="left:-14px;top:881.5px">86</div><div class="code" style="left:85px;top:881px"></div><div class="ln" style="left:-14px;top:903.5px">87</div><div class="code" style="left:85px;top:903px">    <span class="k">public void </span><span class="m">connect</span>() <span class="k">throws </span><span class="g">IOException</span> {</div><div class="ln" style="left:-14px;top:925.5px">88</div><div class="code" style="left:85px;top:925px">        <span class="k">new </span>Bootstrap()</div><div class="ln" style="left:-14px;top:947.5px">89</div><div class="code" style="left:85px;top:947px">                .channel(NioSocketChannel.<span class="k">class</span>)</div><div class="ln" style="left:-14px;top:969.5px">90</div><div class="code" style="left:85px;top:969px">                .group(<span class="f">CONNECTION_EVENT_LOOP</span>)</div><div class="ln" style="left:-14px;top:991.5px">91</div><div class="code" style="left:85px;top:991px">                .handler(<span class="k">new </span>ChannelInitializer&lt;Channel&gt;() {</div><div class="ln" style="left:-14px;top:1013.5px">92</div><div class="code" style="left:85px;top:1013px"></div><div class="ln" style="left:-14px;top:1035.5px">93</div><div class="code" style="left:85px;top:1035px">                    <span class="an">@Override</span></div><div class="ln" style="left:-14px;top:1057.5px">94</div><div class="code" style="left:85px;top:1057px">                    <span class="k">protected void </span><span class="m">initChannel</span>(Channel ch) <span class="k">throws </span><span class="g">Exception</span> {</div><div class="ln" style="left:-14px;top:1079.5px">95</div><div class="code" style="left:85px;top:1079px">                        System.<span class="fi">out</span>.println(<span class="s">"Channel init"</span>)<span class="k">;</span></div><div class="ln" style="left:-14px;top:1101.5px">96</div><div class="code" style="left:85px;top:1101px">                        ch.pipeline()</div><div class="ln" style="left:-14px;top:1123.5px">97</div><div class="code" style="left:85px;top:1123px">                                .addLast(<span class="hint" style="width:43px;text-align:center;margin:0 3px 0 2px">name:</span><span class="s">"tls"</span><span class="k">, </span><span class="fi">sslContext</span>.newHandler(ch.alloc()))</div><div class="ln" style="left:-14px;top:1145.5px">98</div><div class="code" style="left:85px;top:1145px">                                .addLast(<span class="hint" style="width:43px;text-align:center;margin:0 3px 0 2px">name:</span><span class="s">"length"</span><span class="k">, </span><span class="k">new </span>LengthCodec())</div><div class="ln" style="left:-14px;top:1167.5px">99</div><div class="code" style="left:85px;top:1167px">                                .addLast(<span class="hint" style="width:43px;text-align:center;margin:0 3px 0 2px">name:</span><span class="s">"timeout"</span><span class="k">, </span><span class="k">new </span>ReadTimeoutHandler(</div><div class="ln" style="left:-14px;top:1189.5px">100</div><div class="code" style="left:85px;top:1189px">                                .addLast(<span class="hint" style="width:43px;text-align:center;margin:0 3px 0 2px">name:</span><span class="s">"handler"</span><span class="k">, </span><span class="hint" style="width:53px;text-align:center;margin:0 2px 0 1px">handler:</span>Client.<span class="k">this</span>)<span class="k">;</span></div><div class="ln" style="left:-14px;top:1211.5px">101</div><div class="code" style="left:85px;top:1211px">                    }</div><div class="ln" style="left:-14px;top:1233.5px">102</div><div class="code" style="left:85px;top:1233px"></div><div class="ln" style="left:-14px;top:1255.5px">103</div><div class="code" style="left:85px;top:1255px"></div></div><div style="left:1018px;top:58px;width:232px;height:26px;background:#3c3f41"></div><div style="left:1018px;top:84px;width:232px;height:1px;background:#323232"></div><div class="t" style="left:1025px;top:63px;">Gradle</div><svg style="left:1203px;top:63px;" width="16" height="16" viewBox="0 0 16 16"><path d="M14.89 6.75 L14.89 9.25 L12.93 9.06 L12.24 10.73 L13.76 11.98 L11.98 13.76 L10.73 12.24 L9.06 12.93 L9.25 14.89 L6.75 14.89 L6.94 12.93 L5.27 12.24 L4.02 13.76 L2.24 11.98 L3.76 10.73 L3.07 9.06 L1.11 9.25 L1.11 6.75 L3.07 6.94 L3.76 5.27 L2.24 4.02 L4.02 2.24 L5.27 3.76 L6.94 3.07 L6.75 1.11 L9.25 1.11 L9.06 3.07 L10.73 3.76 L11.98 2.24 L13.76 4.02 L12.24 5.27 L12.93 6.94z" fill="#afb1b3"/><circle cx="8" cy="8" r="2.31" fill="#3c3f41"/></svg><div style="left:1230px;top:70px;width:12px;height:2px;background:#afb1b3"></div><div style="left:1018px;top:113px;width:232px;height:1px;background:#323232"></div><svg style="left:1026px;top:91px;" width="15" height="15" viewBox="0 0 15 15"><path d="M12.5 5A5.5 5.5 0 0 0 2.5 6M2.5 10a5.5 5.5 0 0 0 10-1" fill="none" stroke="#afb1b3" stroke-width="1.6"/><path d="M13.5 1.5v4.5H9M1.5 14v-4.5H6" fill="none" stroke="#afb1b3" stroke-width="1.6"/></svg><svg style="left:1052px;top:92px;" width="14" height="14" viewBox="0 0 14 14"><path d="M7 1v12M1 7h12" stroke="#afb1b3" stroke-width="1.8"/></svg><div style="left:1079px;top:98px;width:11px;height:2px;background:#5a5d5f"></div><div style="left:1101px;top:90px;width:1px;height:18px;background:#515151"></div><svg style="left:1110px;top:91px;" width="16" height="15" viewBox="0 0 16 15"><rect x="0.7" y="0.7" width="14.6" height="13.6" fill="none" stroke="#afb1b3" stroke-width="1.3"/><path d="M1 3.5h14" stroke="#afb1b3" stroke-width="1.3"/><path d="M5.5 6l5 3-5 3z" fill="#499c54"/></svg><div style="left:1134px;top:90px;width:1px;height:18px;background:#515151"></div><svg style="left:1143px;top:91px;" width="16" height="16" viewBox="0 0 16 16"><path d="M1 1.5h14M1 14.5h14" stroke="#afb1b3" stroke-width="1.4"/><path d="M4 6l4-3.5L12 6zM4 10l4 3.5 4-3.5z" fill="#afb1b3"/></svg><svg style="left:1169px;top:91px;" width="16" height="16" viewBox="0 0 16 16"><path d="M1 8h14" stroke="#afb1b3" stroke-width="1.4"/><path d="M4 2l4 4 4-4zM4 14l4-4 4 4z" fill="#afb1b3"/></svg><svg style="left:1195px;top:91px;" width="16" height="16" viewBox="0 0 16 16"><path d="M0.5 1h6l2 2h6v10H0.5z" fill="#9aa7b0"/><rect x="9" y="9" width="7" height="7" fill="#3c3f41"/><rect x="9.5" y="9.5" width="2.6" height="2.6" fill="#40b6e0"/><rect x="13" y="9.5" width="2.6" height="2.6" fill="#40b6e0"/><rect x="9.5" y="13" width="2.6" height="2.6" fill="#40b6e0"/><rect x="13" y="13" width="2.6" height="2.6" fill="#40b6e0"/></svg><div style="left:1220px;top:90px;width:1px;height:18px;background:#515151"></div><svg style="left:1238px;top:94px;" width="8" height="9" viewBox="0 0 8 9"><path d="M0.5 0.5l3 4-3 4M4.5 0.5l3 4-3 4" fill="none" stroke="#9a9da0" stroke-width="1"/></svg><svg style="left:1024px;top:121px;" width="10" height="6" viewBox="0 0 10 6"><path d="M0.8 0.8L5 5 9.2 0.8" fill="none" stroke="#9a9da0" stroke-width="1.2"/></svg><svg style="left:1042px;top:116px;" width="16" height="16" viewBox="0 0 16 16"><path d="M15.2 3.6c-.8-1.2-2.4-1.5-3.5-.7l-.3.3c.5.2 1 .5 1.3.9.4-.3.9-.2 1.2.1.4.5.2 1.1-.3 1.6-2.6 2.5-5.6-3.2-10.4-.8C1.3 6 .6 8.2 1 11l.4 2.6h2l.6-2c1.4.8 3 1 4.4.6l.9 1.4h2l-.3-2.5c1.2-.8 2-2 2.3-3.3.8-.4 1.5-1 2-1.7.6-.9.5-1.8-.1-2.5z" fill="#9aa7b0"/><circle cx="11.6" cy="6.6" r=".6" fill="#3c3f41"/></svg><div class="t" style="left:1061px;top:117px;;letter-spacing:-0.629px;">IRC-NET</div><svg style="left:1044px;top:139px;" width="6" height="10" viewBox="0 0 6 10"><path d="M0.8 0.8L5 5 0.8 9.2" fill="none" stroke="#9a9da0" stroke-width="1.2"/></svg><svg style="left:1060px;top:136px;" width="16" height="16" viewBox="0 0 16 16"><path d="M1 2.5h5l1.5 1.5H15v9H1z" fill="#9aa7b0"/><circle cx="12" cy="12" r="4.6" fill="#3c3f41"/><path d="M15.74 11.32 L15.74 12.68 L14.67 12.58 L14.30 13.48 L15.12 14.16 L14.16 15.12 L13.48 14.30 L12.58 14.67 L12.68 15.74 L11.32 15.74 L11.42 14.67 L10.52 14.30 L9.84 15.12 L8.88 14.16 L9.70 13.48 L9.33 12.58 L8.26 12.68 L8.26 11.32 L9.33 11.42 L9.70 10.52 L8.88 9.84 L9.84 8.88 L10.52 9.70 L11.42 9.33 L11.32 8.26 L12.68 8.26 L12.58 9.33 L13.48 9.70 L14.16 8.88 L15.12 9.84 L14.30 10.52 L14.67 11.42z" fill="#40b6e0"/><circle cx="12" cy="12" r="1.25" fill="#3c3f41"/></svg><div class="t" style="left:1079px;top:137px;;letter-spacing:-0.697px;">Tasks</div><svg style="left:1044px;top:159px;" width="6" height="10" viewBox="0 0 6 10"><path d="M0.8 0.8L5 5 0.8 9.2" fill="none" stroke="#9a9da0" stroke-width="1.2"/></svg><svg style="left:1060px;top:156px;" width="16" height="16" viewBox="0 0 16 16"><path d="M1 2.5h5l1.5 1.5H15v9H1z" fill="#9aa7b0"/><circle cx="12" cy="12" r="4.6" fill="#3c3f41"/><path d="M15.74 11.32 L15.74 12.68 L14.67 12.58 L14.30 13.48 L15.12 14.16 L14.16 15.12 L13.48 14.30 L12.58 14.67 L12.68 15.74 L11.32 15.74 L11.42 14.67 L10.52 14.30 L9.84 15.12 L8.88 14.16 L9.70 13.48 L9.33 12.58 L8.26 12.68 L8.26 11.32 L9.33 11.42 L9.70 10.52 L8.88 9.84 L9.84 8.88 L10.52 9.70 L11.42 9.33 L11.32 8.26 L12.68 8.26 L12.58 9.33 L13.48 9.70 L14.16 8.88 L15.12 9.84 L14.30 10.52 L14.67 11.42z" fill="#40b6e0"/><circle cx="12" cy="12" r="1.25" fill="#3c3f41"/></svg><div class="t" style="left:1079px;top:157px;;letter-spacing:0.045px;">Run Configurations</div><svg style="left:1042px;top:181px;" width="10" height="6" viewBox="0 0 10 6"><path d="M0.8 0.8L5 5 9.2 0.8" fill="none" stroke="#9a9da0" stroke-width="1.2"/></svg><svg style="left:1060px;top:176px;" width="16" height="16" viewBox="0 0 16 16"><path d="M15.2 3.6c-.8-1.2-2.4-1.5-3.5-.7l-.3.3c.5.2 1 .5 1.3.9.4-.3.9-.2 1.2.1.4.5.2 1.1-.3 1.6-2.6 2.5-5.6-3.2-10.4-.8C1.3 6 .6 8.2 1 11l.4 2.6h2l.6-2c1.4.8 3 1 4.4.6l.9 1.4h2l-.3-2.5c1.2-.8 2-2 2.3-3.3.8-.4 1.5-1 2-1.7.6-.9.5-1.8-.1-2.5z" fill="#9aa7b0"/><circle cx="11.6" cy="6.6" r=".6" fill="#3c3f41"/></svg><div class="t" style="left:1079px;top:177px;;letter-spacing:0.062px;">Client</div><svg style="left:1060px;top:201px;" width="10" height="6" viewBox="0 0 10 6"><path d="M0.8 0.8L5 5 9.2 0.8" fill="none" stroke="#9a9da0" stroke-width="1.2"/></svg><svg style="left:1078px;top:196px;" width="16" height="16" viewBox="0 0 16 16"><path d="M1 2.5h5l1.5 1.5H15v9H1z" fill="#9aa7b0"/><circle cx="12" cy="12" r="4.6" fill="#3c3f41"/><path d="M15.74 11.32 L15.74 12.68 L14.67 12.58 L14.30 13.48 L15.12 14.16 L14.16 15.12 L13.48 14.30 L12.58 14.67 L12.68 15.74 L11.32 15.74 L11.42 14.67 L10.52 14.30 L9.84 15.12 L8.88 14.16 L9.70 13.48 L9.33 12.58 L8.26 12.68 L8.26 11.32 L9.33 11.42 L9.70 10.52 L8.88 9.84 L9.84 8.88 L10.52 9.70 L11.42 9.33 L11.32 8.26 L12.68 8.26 L12.58 9.33 L13.48 9.70 L14.16 8.88 L15.12 9.84 L14.30 10.52 L14.67 11.42z" fill="#40b6e0"/><circle cx="12" cy="12" r="1.25" fill="#3c3f41"/></svg><div class="t" style="left:1097px;top:197px;;letter-spacing:-0.597px;">Tasks</div><svg style="left:1078px;top:221px;" width="10" height="6" viewBox="0 0 10 6"><path d="M0.8 0.8L5 5 9.2 0.8" fill="none" stroke="#9a9da0" stroke-width="1.2"/></svg><svg style="left:1096px;top:216px;" width="16" height="16" viewBox="0 0 16 16"><path d="M1 2.5h5l1.5 1.5H15v9H1z" fill="#9aa7b0"/><circle cx="12" cy="12" r="4.6" fill="#3c3f41"/><path d="M15.74 11.32 L15.74 12.68 L14.67 12.58 L14.30 13.48 L15.12 14.16 L14.16 15.12 L13.48 14.30 L12.58 14.67 L12.68 15.74 L11.32 15.74 L11.42 14.67 L10.52 14.30 L9.84 15.12 L8.88 14.16 L9.70 13.48 L9.33 12.58 L8.26 12.68 L8.26 11.32 L9.33 11.42 L9.70 10.52 L8.88 9.84 L9.84 8.88 L10.52 9.70 L11.42 9.33 L11.32 8.26 L12.68 8.26 L12.58 9.33 L13.48 9.70 L14.16 8.88 L15.12 9.84 L14.30 10.52 L14.67 11.42z" fill="#40b6e0"/><circle cx="12" cy="12" r="1.25" fill="#3c3f41"/></svg><div class="t" style="left:1115px;top:217px;;letter-spacing:0.510px;">build</div><svg style="left:1114px;top:236px;" width="16" height="16" viewBox="0 0 16 16"><path d="M14.39 6.84 L14.39 9.16 L12.57 8.99 L11.93 10.54 L13.34 11.70 L11.70 13.34 L10.54 11.93 L8.99 12.57 L9.16 14.39 L6.84 14.39 L7.01 12.57 L5.46 11.93 L4.30 13.34 L2.66 11.70 L4.07 10.54 L3.43 8.99 L1.61 9.16 L1.61 6.84 L3.43 7.01 L4.07 5.46 L2.66 4.30 L4.30 2.66 L5.46 4.07 L7.01 3.43 L6.84 1.61 L9.16 1.61 L8.99 3.43 L10.54 4.07 L11.70 2.66 L13.34 4.30 L11.93 5.46 L12.57 7.01z" fill="#9aa7b0"/><circle cx="8" cy="8" r="2.15" fill="#3c3f41"/></svg><div class="t" style="left:1133px;top:237px;;letter-spacing:-0.251px;">assemble</div><svg style="left:1114px;top:256px;" width="16" height="16" viewBox="0 0 16 16"><path d="M14.39 6.84 L14.39 9.16 L12.57 8.99 L11.93 10.54 L13.34 11.70 L11.70 13.34 L10.54 11.93 L8.99 12.57 L9.16 14.39 L6.84 14.39 L7.01 12.57 L5.46 11.93 L4.30 13.34 L2.66 11.70 L4.07 10.54 L3.43 8.99 L1.61 9.16 L1.61 6.84 L3.43 7.01 L4.07 5.46 L2.66 4.30 L4.30 2.66 L5.46 4.07 L7.01 3.43 L6.84 1.61 L9.16 1.61 L8.99 3.43 L10.54 4.07 L11.70 2.66 L13.34 4.30 L11.93 5.46 L12.57 7.01z" fill="#9aa7b0"/><circle cx="8" cy="8" r="2.15" fill="#3c3f41"/></svg><div class="t" style="left:1133px;top:257px;;letter-spacing:0.460px;">build</div><svg style="left:1114px;top:276px;" width="16" height="16" viewBox="0 0 16 16"><path d="M14.39 6.84 L14.39 9.16 L12.57 8.99 L11.93 10.54 L13.34 11.70 L11.70 13.34 L10.54 11.93 L8.99 12.57 L9.16 14.39 L6.84 14.39 L7.01 12.57 L5.46 11.93 L4.30 13.34 L2.66 11.70 L4.07 10.54 L3.43 8.99 L1.61 9.16 L1.61 6.84 L3.43 7.01 L4.07 5.46 L2.66 4.30 L4.30 2.66 L5.46 4.07 L7.01 3.43 L6.84 1.61 L9.16 1.61 L8.99 3.43 L10.54 4.07 L11.70 2.66 L13.34 4.30 L11.93 5.46 L12.57 7.01z" fill="#9aa7b0"/><circle cx="8" cy="8" r="2.15" fill="#3c3f41"/></svg><div class="t" style="left:1133px;top:277px;;letter-spacing:0.023px;">buildDependents</div><svg style="left:1114px;top:296px;" width="16" height="16" viewBox="0 0 16 16"><path d="M14.39 6.84 L14.39 9.16 L12.57 8.99 L11.93 10.54 L13.34 11.70 L11.70 13.34 L10.54 11.93 L8.99 12.57 L9.16 14.39 L6.84 14.39 L7.01 12.57 L5.46 11.93 L4.30 13.34 L2.66 11.70 L4.07 10.54 L3.43 8.99 L1.61 9.16 L1.61 6.84 L3.43 7.01 L4.07 5.46 L2.66 4.30 L4.30 2.66 L5.46 4.07 L7.01 3.43 L6.84 1.61 L9.16 1.61 L8.99 3.43 L10.54 4.07 L11.70 2.66 L13.34 4.30 L11.93 5.46 L12.57 7.01z" fill="#9aa7b0"/><circle cx="8" cy="8" r="2.15" fill="#3c3f41"/></svg><div class="t" style="left:1133px;top:297px;;letter-spacing:0.061px;">buildNeeded</div><svg style="left:1114px;top:316px;" width="16" height="16" viewBox="0 0 16 16"><path d="M14.39 6.84 L14.39 9.16 L12.57 8.99 L11.93 10.54 L13.34 11.70 L11.70 13.34 L10.54 11.93 L8.99 12.57 L9.16 14.39 L6.84 14.39 L7.01 12.57 L5.46 11.93 L4.30 13.34 L2.66 11.70 L4.07 10.54 L3.43 8.99 L1.61 9.16 L1.61 6.84 L3.43 7.01 L4.07 5.46 L2.66 4.30 L4.30 2.66 L5.46 4.07 L7.01 3.43 L6.84 1.61 L9.16 1.61 L8.99 3.43 L10.54 4.07 L11.70 2.66 L13.34 4.30 L11.93 5.46 L12.57 7.01z" fill="#9aa7b0"/><circle cx="8" cy="8" r="2.15" fill="#3c3f41"/></svg><div class="t" style="left:1133px;top:317px;;letter-spacing:-0.586px;">classes</div><svg style="left:1114px;top:336px;" width="16" height="16" viewBox="0 0 16 16"><path d="M14.39 6.84 L14.39 9.16 L12.57 8.99 L11.93 10.54 L13.34 11.70 L11.70 13.34 L10.54 11.93 L8.99 12.57 L9.16 14.39 L6.84 14.39 L7.01 12.57 L5.46 11.93 L4.30 13.34 L2.66 11.70 L4.07 10.54 L3.43 8.99 L1.61 9.16 L1.61 6.84 L3.43 7.01 L4.07 5.46 L2.66 4.30 L4.30 2.66 L5.46 4.07 L7.01 3.43 L6.84 1.61 L9.16 1.61 L8.99 3.43 L10.54 4.07 L11.70 2.66 L13.34 4.30 L11.93 5.46 L12.57 7.01z" fill="#9aa7b0"/><circle cx="8" cy="8" r="2.15" fill="#3c3f41"/></svg><div class="t" style="left:1133px;top:337px;;letter-spacing:-0.172px;">clean</div><svg style="left:1114px;top:356px;" width="16" height="16" viewBox="0 0 16 16"><path d="M14.39 6.84 L14.39 9.16 L12.57 8.99 L11.93 10.54 L13.34 11.70 L11.70 13.34 L10.54 11.93 L8.99 12.57 L9.16 14.39 L6.84 14.39 L7.01 12.57 L5.46 11.93 L4.30 13.34 L2.66 11.70 L4.07 10.54 L3.43 8.99 L1.61 9.16 L1.61 6.84 L3.43 7.01 L4.07 5.46 L2.66 4.30 L4.30 2.66 L5.46 4.07 L7.01 3.43 L6.84 1.61 L9.16 1.61 L8.99 3.43 L10.54 4.07 L11.70 2.66 L13.34 4.30 L11.93 5.46 L12.57 7.01z" fill="#9aa7b0"/><circle cx="8" cy="8" r="2.15" fill="#3c3f41"/></svg><div class="t" style="left:1133px;top:357px;;letter-spacing:0.328px;">jar</div><svg style="left:1114px;top:376px;" width="16" height="16" viewBox="0 0 16 16"><path d="M14.39 6.84 L14.39 9.16 L12.57 8.99 L11.93 10.54 L13.34 11.70 L11.70 13.34 L10.54 11.93 L8.99 12.57 L9.16 14.39 L6.84 14.39 L7.01 12.57 L5.46 11.93 L4.30 13.34 L2.66 11.70 L4.07 10.54 L3.43 8.99 L1.61 9.16 L1.61 6.84 L3.43 7.01 L4.07 5.46 L2.66 4.30 L4.30 2.66 L5.46 4.07 L7.01 3.43 L6.84 1.61 L9.16 1.61 L8.99 3.43 L10.54 4.07 L11.70 2.66 L13.34 4.30 L11.93 5.46 L12.57 7.01z" fill="#9aa7b0"/><circle cx="8" cy="8" r="2.15" fill="#3c3f41"/></svg><div class="t" style="left:1133px;top:377px;;letter-spacing:-0.473px;">testClasses</div><svg style="left:1080px;top:399px;" width="6" height="10" viewBox="0 0 6 10"><path d="M0.8 0.8L5 5 0.8 9.2" fill="none" stroke="#9a9da0" stroke-width="1.2"/></svg><svg style="left:1096px;top:396px;" width="16" height="16" viewBox="0 0 16 16"><path d="M1 2.5h5l1.5 1.5H15v9H1z" fill="#9aa7b0"/><circle cx="12" cy="12" r="4.6" fill="#3c3f41"/><path d="M15.74 11.32 L15.74 12.68 L14.67 12.58 L14.30 13.48 L15.12 14.16 L14.16 15.12 L13.48 14.30 L12.58 14.67 L12.68 15.74 L11.32 15.74 L11.42 14.67 L10.52 14.30 L9.84 15.12 L8.88 14.16 L9.70 13.48 L9.33 12.58 L8.26 12.68 L8.26 11.32 L9.33 11.42 L9.70 10.52 L8.88 9.84 L9.84 8.88 L10.52 9.70 L11.42 9.33 L11.32 8.26 L12.68 8.26 L12.58 9.33 L13.48 9.70 L14.16 8.88 L15.12 9.84 L14.30 10.52 L14.67 11.42z" fill="#40b6e0"/><circle cx="12" cy="12" r="1.25" fill="#3c3f41"/></svg><div class="t" style="left:1115px;top:397px;;letter-spacing:0.272px;">documentation</div><svg style="left:1080px;top:419px;" width="6" height="10" viewBox="0 0 6 10"><path d="M0.8 0.8L5 5 0.8 9.2" fill="none" stroke="#9a9da0" stroke-width="1.2"/></svg><svg style="left:1096px;top:416px;" width="16" height="16" viewBox="0 0 16 16"><path d="M1 2.5h5l1.5 1.5H15v9H1z" fill="#9aa7b0"/><circle cx="12" cy="12" r="4.6" fill="#3c3f41"/><path d="M15.74 11.32 L15.74 12.68 L14.67 12.58 L14.30 13.48 L15.12 14.16 L14.16 15.12 L13.48 14.30 L12.58 14.67 L12.68 15.74 L11.32 15.74 L11.42 14.67 L10.52 14.30 L9.84 15.12 L8.88 14.16 L9.70 13.48 L9.33 12.58 L8.26 12.68 L8.26 11.32 L9.33 11.42 L9.70 10.52 L8.88 9.84 L9.84 8.88 L10.52 9.70 L11.42 9.33 L11.32 8.26 L12.68 8.26 L12.58 9.33 L13.48 9.70 L14.16 8.88 L15.12 9.84 L14.30 10.52 L14.67 11.42z" fill="#40b6e0"/><circle cx="12" cy="12" r="1.25" fill="#3c3f41"/></svg><div class="t" style="left:1115px;top:417px;;letter-spacing:0.271px;">help</div><svg style="left:1080px;top:439px;" width="6" height="10" viewBox="0 0 6 10"><path d="M0.8 0.8L5 5 0.8 9.2" fill="none" stroke="#9a9da0" stroke-width="1.2"/></svg><svg style="left:1096px;top:436px;" width="16" height="16" viewBox="0 0 16 16"><path d="M1 2.5h5l1.5 1.5H15v9H1z" fill="#9aa7b0"/><circle cx="12" cy="12" r="4.6" fill="#3c3f41"/><path d="M15.74 11.32 L15.74 12.68 L14.67 12.58 L14.30 13.48 L15.12 14.16 L14.16 15.12 L13.48 14.30 L12.58 14.67 L12.68 15.74 L11.32 15.74 L11.42 14.67 L10.52 14.30 L9.84 15.12 L8.88 14.16 L9.70 13.48 L9.33 12.58 L8.26 12.68 L8.26 11.32 L9.33 11.42 L9.70 10.52 L8.88 9.84 L9.84 8.88 L10.52 9.70 L11.42 9.33 L11.32 8.26 L12.68 8.26 L12.58 9.33 L13.48 9.70 L14.16 8.88 L15.12 9.84 L14.30 10.52 L14.67 11.42z" fill="#40b6e0"/><circle cx="12" cy="12" r="1.25" fill="#3c3f41"/></svg><div class="t" style="left:1115px;top:437px;;letter-spacing:0.285px;">other</div><svg style="left:1080px;top:459px;" width="6" height="10" viewBox="0 0 6 10"><path d="M0.8 0.8L5 5 0.8 9.2" fill="none" stroke="#9a9da0" stroke-width="1.2"/></svg><svg style="left:1096px;top:456px;" width="16" height="16" viewBox="0 0 16 16"><path d="M1 2.5h5l1.5 1.5H15v9H1z" fill="#9aa7b0"/><circle cx="12" cy="12" r="4.6" fill="#3c3f41"/><path d="M15.74 11.32 L15.74 12.68 L14.67 12.58 L14.30 13.48 L15.12 14.16 L14.16 15.12 L13.48 14.30 L12.58 14.67 L12.68 15.74 L11.32 15.74 L11.42 14.67 L10.52 14.30 L9.84 15.12 L8.88 14.16 L9.70 13.48 L9.33 12.58 L8.26 12.68 L8.26 11.32 L9.33 11.42 L9.70 10.52 L8.88 9.84 L9.84 8.88 L10.52 9.70 L11.42 9.33 L11.32 8.26 L12.68 8.26 L12.58 9.33 L13.48 9.70 L14.16 8.88 L15.12 9.84 L14.30 10.52 L14.67 11.42z" fill="#40b6e0"/><circle cx="12" cy="12" r="1.25" fill="#3c3f41"/></svg><div class="t" style="left:1115px;top:457px;;letter-spacing:0.045px;">shadow</div><svg style="left:1080px;top:479px;" width="6" height="10" viewBox="0 0 6 10"><path d="M0.8 0.8L5 5 0.8 9.2" fill="none" stroke="#9a9da0" stroke-width="1.2"/></svg><svg style="left:1096px;top:476px;" width="16" height="16" viewBox="0 0 16 16"><path d="M1 2.5h5l1.5 1.5H15v9H1z" fill="#9aa7b0"/><circle cx="12" cy="12" r="4.6" fill="#3c3f41"/><path d="M15.74 11.32 L15.74 12.68 L14.67 12.58 L14.30 13.48 L15.12 14.16 L14.16 15.12 L13.48 14.30 L12.58 14.67 L12.68 15.74 L11.32 15.74 L11.42 14.67 L10.52 14.30 L9.84 15.12 L8.88 14.16 L9.70 13.48 L9.33 12.58 L8.26 12.68 L8.26 11.32 L9.33 11.42 L9.70 10.52 L8.88 9.84 L9.84 8.88 L10.52 9.70 L11.42 9.33 L11.32 8.26 L12.68 8.26 L12.58 9.33 L13.48 9.70 L14.16 8.88 L15.12 9.84 L14.30 10.52 L14.67 11.42z" fill="#40b6e0"/><circle cx="12" cy="12" r="1.25" fill="#3c3f41"/></svg><div class="t" style="left:1115px;top:477px;;letter-spacing:0.176px;">verification</div><svg style="left:1062px;top:499px;" width="6" height="10" viewBox="0 0 6 10"><path d="M0.8 0.8L5 5 0.8 9.2" fill="none" stroke="#9a9da0" stroke-width="1.2"/></svg><svg style="left:1078px;top:496px;" width="16" height="16" viewBox="0 0 16 16"><path d="M1 2.5h5l1.5 1.5H15v9H1z" fill="#9aa7b0"/><rect x="5" y="7" width="11" height="9" fill="#3c3f41"/><path d="M7 16V10M10.5 16V8M14 16V11" stroke="#40b6e0" stroke-width="2"/><path d="M7 16V11" stroke="#62b543" stroke-width="2"/></svg><div class="t" style="left:1097px;top:497px;;letter-spacing:-0.203px;">Dependencies</div><svg style="left:1044px;top:519px;" width="6" height="10" viewBox="0 0 6 10"><path d="M0.8 0.8L5 5 0.8 9.2" fill="none" stroke="#9a9da0" stroke-width="1.2"/></svg><svg style="left:1060px;top:516px;" width="16" height="16" viewBox="0 0 16 16"><path d="M15.2 3.6c-.8-1.2-2.4-1.5-3.5-.7l-.3.3c.5.2 1 .5 1.3.9.4-.3.9-.2 1.2.1.4.5.2 1.1-.3 1.6-2.6 2.5-5.6-3.2-10.4-.8C1.3 6 .6 8.2 1 11l.4 2.6h2l.6-2c1.4.8 3 1 4.4.6l.9 1.4h2l-.3-2.5c1.2-.8 2-2 2.3-3.3.8-.4 1.5-1 2-1.7.6-.9.5-1.8-.1-2.5z" fill="#9aa7b0"/><circle cx="11.6" cy="6.6" r=".6" fill="#3c3f41"/></svg><div class="t" style="left:1079px;top:517px;;letter-spacing:-0.005px;">Core</div><div style="left:1018px;top:534px;width:232px;height:20px;background:#0d293e"></div><svg style="left:1044px;top:539px;" width="6" height="10" viewBox="0 0 6 10"><path d="M0.8 0.8L5 5 0.8 9.2" fill="none" stroke="#9a9da0" stroke-width="1.2"/></svg><svg style="left:1060px;top:536px;" width="16" height="16" viewBox="0 0 16 16"><path d="M15.2 3.6c-.8-1.2-2.4-1.5-3.5-.7l-.3.3c.5.2 1 .5 1.3.9.4-.3.9-.2 1.2.1.4.5.2 1.1-.3 1.6-2.6 2.5-5.6-3.2-10.4-.8C1.3 6 .6 8.2 1 11l.4 2.6h2l.6-2c1.4.8 3 1 4.4.6l.9 1.4h2l-.3-2.5c1.2-.8 2-2 2.3-3.3.8-.4 1.5-1 2-1.7.6-.9.5-1.8-.1-2.5z" fill="#9aa7b0"/><circle cx="11.6" cy="6.6" r=".6" fill="#3c3f41"/></svg><div class="t" style="left:1079px;top:537px;;letter-spacing:0.234px;">Injector</div><svg style="left:1044px;top:559px;" width="6" height="10" viewBox="0 0 6 10"><path d="M0.8 0.8L5 5 0.8 9.2" fill="none" stroke="#9a9da0" stroke-width="1.2"/></svg><svg style="left:1060px;top:556px;" width="16" height="16" viewBox="0 0 16 16"><path d="M15.2 3.6c-.8-1.2-2.4-1.5-3.5-.7l-.3.3c.5.2 1 .5 1.3.9.4-.3.9-.2 1.2.1.4.5.2 1.1-.3 1.6-2.6 2.5-5.6-3.2-10.4-.8C1.3 6 .6 8.2 1 11l.4 2.6h2l.6-2c1.4.8 3 1 4.4.6l.9 1.4h2l-.3-2.5c1.2-.8 2-2 2.3-3.3.8-.4 1.5-1 2-1.7.6-.9.5-1.8-.1-2.5z" fill="#9aa7b0"/><circle cx="11.6" cy="6.6" r=".6" fill="#3c3f41"/></svg><div class="t" style="left:1079px;top:557px;;letter-spacing:-0.225px;">SecretCreator</div><svg style="left:1044px;top:579px;" width="6" height="10" viewBox="0 0 6 10"><path d="M0.8 0.8L5 5 0.8 9.2" fill="none" stroke="#9a9da0" stroke-width="1.2"/></svg><svg style="left:1060px;top:576px;" width="16" height="16" viewBox="0 0 16 16"><path d="M15.2 3.6c-.8-1.2-2.4-1.5-3.5-.7l-.3.3c.5.2 1 .5 1.3.9.4-.3.9-.2 1.2.1.4.5.2 1.1-.3 1.6-2.6 2.5-5.6-3.2-10.4-.8C1.3 6 .6 8.2 1 11l.4 2.6h2l.6-2c1.4.8 3 1 4.4.6l.9 1.4h2l-.3-2.5c1.2-.8 2-2 2.3-3.3.8-.4 1.5-1 2-1.7.6-.9.5-1.8-.1-2.5z" fill="#9aa7b0"/><circle cx="11.6" cy="6.6" r=".6" fill="#3c3f41"/></svg><div class="t" style="left:1079px;top:577px;;letter-spacing:-0.469px;">Server</div><svg style="left:1044px;top:599px;" width="6" height="10" viewBox="0 0 6 10"><path d="M0.8 0.8L5 5 0.8 9.2" fill="none" stroke="#9a9da0" stroke-width="1.2"/></svg><svg style="left:1060px;top:596px;" width="16" height="16" viewBox="0 0 16 16"><path d="M15.2 3.6c-.8-1.2-2.4-1.5-3.5-.7l-.3.3c.5.2 1 .5 1.3.9.4-.3.9-.2 1.2.1.4.5.2 1.1-.3 1.6-2.6 2.5-5.6-3.2-10.4-.8C1.3 6 .6 8.2 1 11l.4 2.6h2l.6-2c1.4.8 3 1 4.4.6l.9 1.4h2l-.3-2.5c1.2-.8 2-2 2.3-3.3.8-.4 1.5-1 2-1.7.6-.9.5-1.8-.1-2.5z" fill="#9aa7b0"/><circle cx="11.6" cy="6.6" r=".6" fill="#3c3f41"/></svg><div class="t" style="left:1079px;top:597px;;letter-spacing:-0.339px;">Spreader</div><div style="left:1250px;top:58px;width:1px;height:1290px;background:#323232"></div><div style="left:1251px;top:142px;width:14px;height:71px;background:#2d2f30"></div><svg style="left:1254px;top:68px;" width="11" height="12" viewBox="0 0 11 12"><ellipse cx="5.5" cy="2.5" rx="5" ry="2" fill="#afb1b3"/><path d="M0.5 4v2.5c0 1.1 2.2 2 5 2s5-.9 5-2V4M0.5 8v2.5c0 1.1 2.2 2 5 2s5-.9 5-2V8" fill="#afb1b3"/></svg><div class="t" style="left:1253px;top:84px;width:14px;height:48px;"><div class="t" style="left:50%;top:50%;transform:translate(-50%,-50%) rotate(90deg);color:#bbbbbb;font-size:11.5px;">Database</div></div><svg style="left:1254px;top:156px;" width="12" height="11" viewBox="0 0 12 11"><path d="M1 10c0-5 2-8 5-8s5 3 5 8h-2V8H7v2H5V8H3v2z" fill="#afb1b3"/></svg><div class="t" style="left:1253px;top:170px;width:14px;height:37px;"><div class="t" style="left:50%;top:50%;transform:translate(-50%,-50%) rotate(90deg);color:#dfe1e5;font-size:11.5px;">Gradle</div></div><svg style="left:1254px;top:223px;" width="12" height="15" viewBox="0 0 12 15"><path d="M6 1c3 0 4 2.5 4 5v3l1.5 2.5h-11L2 9V6c0-2.5 1-5 4-5z" fill="#afb1b3"/><circle cx="6" cy="13" r="1.6" fill="#afb1b3"/></svg><div class="t" style="left:1253px;top:242px;width:14px;height:64px;"><div class="t" style="left:50%;top:50%;transform:translate(-50%,-50%) rotate(90deg);color:#bbbbbb;font-size:11.5px;">Notifications</div></div><div style="left:0px;top:1348px;width:1265px;height:1px;background:#323232"></div><div style="left:0px;top:1349px;width:1265px;height:22px;background:#3c3f41"></div><div style="left:0px;top:1370px;width:1265px;height:1px;background:#4a4b4c"></div><div class="t" style="left:41px;top:1353px;;letter-spacing:0.328px;">Git</div><div class="t" style="left:91px;top:1353px;;letter-spacing:-0.484px;">TODO</div><div class="t" style="left:161px;top:1353px;;letter-spacing:-0.384px;">Problems</div><div class="t" style="left:246px;top:1353px;;letter-spacing:-0.051px;">Terminal</div><div class="t" style="left:328px;top:1353px;;letter-spacing:-0.859px;">Services</div><div class="t" style="left:404px;top:1353px;;letter-spacing:-0.002px;">Profiler</div><div class="t" style="left:480px;top:1353px;;letter-spacing:-0.339px;">Dependencies</div><svg style="left:26px;top:1354px;" width="10" height="13" viewBox="0 0 10 13"><circle cx="2.5" cy="2" r="1.7" fill="#afb1b3"/><circle cx="2.5" cy="11" r="1.7" fill="#afb1b3"/><circle cx="8" cy="2.5" r="1.7" fill="#afb1b3"/><path d="M2.5 2v9M8 2.5c0 4-5.5 3.5-5.5 7" fill="none" stroke="#afb1b3" stroke-width="1.6"/></svg><svg style="left:77px;top:1355px;" width="10" height="10" viewBox="0 0 10 10"><path d="M0 1.5h2M0 5h2M0 8.5h2M3.5 1.5H10M3.5 5H10M3.5 8.5H10" stroke="#afb1b3" stroke-width="1.5"/></svg><svg style="left:145px;top:1354px;" width="12" height="12" viewBox="0 0 12 12"><circle cx="6" cy="6" r="5.5" fill="#afb1b3"/><path d="M6 2.5v4.5" stroke="#3c3f41" stroke-width="1.6"/><circle cx="6" cy="9" r="0.9" fill="#3c3f41"/></svg><svg style="left:230px;top:1354px;" width="13" height="12" viewBox="0 0 13 12"><rect x="0" y="0" width="13" height="12" fill="#afb1b3"/><path d="M2 3l3 2-3 2" fill="none" stroke="#3c3f41" stroke-width="1.2"/><path d="M5 9h5" stroke="#3c3f41" stroke-width="1.2"/></svg><svg style="left:311px;top:1354px;" width="13" height="12" viewBox="0 0 13 12"><path d="M3 0h7l3 6-3 6H3L0 6z" fill="#afb1b3"/><path d="M5 3.5l4 2.5-4 2.5z" fill="#3c3f41"/></svg><svg style="left:389px;top:1354px;" width="14" height="13" viewBox="0 0 14 13"><circle cx="6" cy="6" r="5" fill="none" stroke="#afb1b3" stroke-width="1.5"/><path d="M6 3v3l2 1.5" fill="none" stroke="#afb1b3" stroke-width="1.2"/><path d="M8 7l6 3-6 3z" fill="#afb1b3"/></svg><svg style="left:464px;top:1354px;" width="13" height="12" viewBox="0 0 13 12"><path d="M6.5 0L13 3 6.5 6 0 3z" fill="#afb1b3"/><path d="M0 6l6.5 3L13 6M0 9l6.5 3L13 9" fill="none" stroke="#afb1b3" stroke-width="1.2"/></svg><svg style="left:6px;top:1375px;" width="11" height="11" viewBox="0 0 11 11"><rect x="0.5" y="2.5" width="8" height="8" fill="none" stroke="#afb1b3"/><path d="M2.5 0.5h8v8" fill="none" stroke="#afb1b3"/></svg><div class="t" style="left:1016px;top:1373px;;letter-spacing:-1.008px;">128:1</div><div class="t" style="left:1055px;top:1373px;;letter-spacing:-1.448px;">CRLF</div><div class="t" style="left:1094px;top:1373px;;letter-spacing:-0.625px;">UTF-8</div><div class="t" style="left:1137px;top:1373px;;letter-spacing:-0.504px;">4 spaces</div><div class="t" style="left:1210px;top:1373px;;letter-spacing:0.328px;">main</div><svg style="left:1196px;top:1374px;" width="9" height="13" viewBox="0 0 9 13"><circle cx="2" cy="2" r="1.5" fill="#afb1b3"/><circle cx="2" cy="11" r="1.5" fill="#afb1b3"/><circle cx="7" cy="3" r="1.5" fill="#afb1b3"/><path d="M2 2v9M7 3c0 3-5 3-5 6" fill="none" stroke="#afb1b3" stroke-width="1.3"/></svg><svg style="left:1246px;top:1375px;" width="10" height="11" viewBox="0 0 10 11"><path d="M1.5 5V3a2.5 2.5 0 0 1 5 0" fill="none" stroke="#afb1b3" stroke-width="1.3"/><rect x="3" y="5" width="7" height="6" fill="#afb1b3"/></svg><div style="left:413px;top:239px;width:1px;height:66px;background:#393939"></div><div style="left:445px;top:261px;width:1px;height:22px;background:#393939"></div><div style="left:413px;top:393px;width:1px;height:220px;background:#393939"></div><div style="left:445px;top:547px;width:1px;height:44px;background:#393939"></div><div style="left:413px;top:701px;width:1px;height:66px;background:#393939"></div><div style="left:445px;top:723px;width:1px;height:22px;background:#393939"></div><div style="left:413px;top:1009px;width:1px;height:352px;background:#393939"></div><div style="left:445px;top:1031px;width:1px;height:330px;background:#393939"></div><div style="left:509px;top:1097px;width:1px;height:264px;background:#393939"></div><div style="left:541px;top:1163px;width:1px;height:132px;background:#393939"></div><div style="left:573px;top:1207px;width:1px;height:88px;background:#393939"></div><div style="left:438px;top:129px;width:24px;height:22px;background:rgba(80,80,80,0.28)"></div><div style="left:782px;top:943px;width:24px;height:22px;background:rgba(80,80,80,0.28)"></div><div style="left:367px;top:129px;width:9px;height:22px;background:#374654"></div><svg style="left:372px;top:224px;" width="9" height="12" viewBox="0 0 9 12"><path d="M0.5 0.5h8v7L4.5 11.5 0.5 7.5z" fill="#313335" stroke="#5b5e60"/><path d="M2.5 4.5h4" stroke="#5b5e60"/></svg><svg style="left:372px;top:246px;" width="9" height="12" viewBox="0 0 9 12"><path d="M0.5 0.5h8v7L4.5 11.5 0.5 7.5z" fill="#313335" stroke="#5b5e60"/><path d="M2.5 4.5h4" stroke="#5b5e60"/></svg><svg style="left:372px;top:378px;" width="9" height="12" viewBox="0 0 9 12"><path d="M0.5 0.5h8v7L4.5 11.5 0.5 7.5z" fill="#313335" stroke="#5b5e60"/><path d="M2.5 4.5h4" stroke="#5b5e60"/></svg><svg style="left:372px;top:400px;" width="9" height="12" viewBox="0 0 9 12"><path d="M0.5 0.5h8v7L4.5 11.5 0.5 7.5z" fill="#313335" stroke="#5b5e60"/><path d="M2.5 4.5h4" stroke="#5b5e60"/></svg><svg style="left:372px;top:466px;" width="9" height="12" viewBox="0 0 9 12"><path d="M0.5 0.5h8v7L4.5 11.5 0.5 7.5z" fill="#313335" stroke="#5b5e60"/><path d="M2.5 4.5h4" stroke="#5b5e60"/></svg><svg style="left:372px;top:532px;" width="9" height="12" viewBox="0 0 9 12"><path d="M0.5 0.5h8v7L4.5 11.5 0.5 7.5z" fill="#313335" stroke="#5b5e60"/><path d="M2.5 4.5h4" stroke="#5b5e60"/></svg><svg style="left:372px;top:686px;" width="9" height="12" viewBox="0 0 9 12"><path d="M0.5 0.5h8v7L4.5 11.5 0.5 7.5z" fill="#313335" stroke="#5b5e60"/><path d="M2.5 4.5h4" stroke="#5b5e60"/></svg><svg style="left:372px;top:708px;" width="9" height="12" viewBox="0 0 9 12"><path d="M0.5 0.5h8v7L4.5 11.5 0.5 7.5z" fill="#313335" stroke="#5b5e60"/><path d="M2.5 4.5h4" stroke="#5b5e60"/></svg><svg style="left:372px;top:994px;" width="9" height="12" viewBox="0 0 9 12"><path d="M0.5 0.5h8v7L4.5 11.5 0.5 7.5z" fill="#313335" stroke="#5b5e60"/><path d="M2.5 4.5h4" stroke="#5b5e60"/></svg><svg style="left:372px;top:1082px;" width="9" height="12" viewBox="0 0 9 12"><path d="M0.5 0.5h8v7L4.5 11.5 0.5 7.5z" fill="#313335" stroke="#5b5e60"/><path d="M2.5 4.5h4" stroke="#5b5e60"/></svg><svg style="left:372px;top:1302px;" width="9" height="12" viewBox="0 0 9 12"><path d="M0.5 0.5h8v7L4.5 11.5 0.5 7.5z" fill="#313335" stroke="#5b5e60"/><path d="M2.5 4.5h4" stroke="#5b5e60"/></svg><svg style="left:372px;top:287px;" width="9" height="12" viewBox="0 0 9 12"><path d="M0.5 11.5h8v-7L4.5 0.5 0.5 4.5z" fill="#313335" stroke="#5b5e60"/><path d="M2.5 7.5h4" stroke="#5b5e60"/></svg><svg style="left:372px;top:309px;" width="9" height="12" viewBox="0 0 9 12"><path d="M0.5 11.5h8v-7L4.5 0.5 0.5 4.5z" fill="#313335" stroke="#5b5e60"/><path d="M2.5 7.5h4" stroke="#5b5e60"/></svg><svg style="left:372px;top:419px;" width="9" height="12" viewBox="0 0 9 12"><path d="M0.5 11.5h8v-7L4.5 0.5 0.5 4.5z" fill="#313335" stroke="#5b5e60"/><path d="M2.5 7.5h4" stroke="#5b5e60"/></svg><svg style="left:372px;top:485px;" width="9" height="12" viewBox="0 0 9 12"><path d="M0.5 11.5h8v-7L4.5 0.5 0.5 4.5z" fill="#313335" stroke="#5b5e60"/><path d="M2.5 7.5h4" stroke="#5b5e60"/></svg><svg style="left:372px;top:595px;" width="9" height="12" viewBox="0 0 9 12"><path d="M0.5 11.5h8v-7L4.5 0.5 0.5 4.5z" fill="#313335" stroke="#5b5e60"/><path d="M2.5 7.5h4" stroke="#5b5e60"/></svg><svg style="left:372px;top:617px;" width="9" height="12" viewBox="0 0 9 12"><path d="M0.5 11.5h8v-7L4.5 0.5 0.5 4.5z" fill="#313335" stroke="#5b5e60"/><path d="M2.5 7.5h4" stroke="#5b5e60"/></svg><svg style="left:372px;top:749px;" width="9" height="12" viewBox="0 0 9 12"><path d="M0.5 11.5h8v-7L4.5 0.5 0.5 4.5z" fill="#313335" stroke="#5b5e60"/><path d="M2.5 7.5h4" stroke="#5b5e60"/></svg><svg style="left:372px;top:771px;" width="9" height="12" viewBox="0 0 9 12"><path d="M0.5 11.5h8v-7L4.5 0.5 0.5 4.5z" fill="#313335" stroke="#5b5e60"/><path d="M2.5 7.5h4" stroke="#5b5e60"/></svg><svg style="left:372px;top:1145px;" width="9" height="12" viewBox="0 0 9 12"><path d="M0.5 11.5h8v-7L4.5 0.5 0.5 4.5z" fill="#313335" stroke="#5b5e60"/><path d="M2.5 7.5h4" stroke="#5b5e60"/></svg><svg style="left:372px;top:136px;" width="9" height="9" viewBox="0 0 9 9"><rect x="0.5" y="0.5" width="8" height="8" fill="#2b2b2b" stroke="#5b5e60"/><path d="M2 4.5h5M4.5 2v5" stroke="#8a8d90"/></svg><svg style="left:372px;top:950px;" width="9" height="9" viewBox="0 0 9 9"><rect x="0.5" y="0.5" width="8" height="8" fill="#313335" stroke="#5b5e60"/><path d="M2 4.5h5M4.5 2v5" stroke="#8a8d90"/></svg><svg style="left:329px;top:398px;" width="20" height="14" viewBox="0 0 20 14"><circle cx="5.5" cy="6.5" r="4.6" fill="#4e9a5c"/><path d="M5.5 4.3v4.4M4.3 4.3h2.4M4.3 8.7h2.4" stroke="#2b2b2b" stroke-width="1"/><path d="M12.5 13V3" stroke="#c75a2b" stroke-width="1.3"/><path d="M10.3 4.6L12.5 1.4 14.7 4.6z" fill="#c75a2b"/></svg><svg style="left:329px;top:464px;" width="20" height="14" viewBox="0 0 20 14"><circle cx="5.5" cy="6.5" r="4.6" fill="#4e9a5c"/><path d="M5.5 4.3v4.4M4.3 4.3h2.4M4.3 8.7h2.4" stroke="#2b2b2b" stroke-width="1"/><path d="M12.5 13V3" stroke="#c75a2b" stroke-width="1.3"/><path d="M10.3 4.6L12.5 1.4 14.7 4.6z" fill="#c75a2b"/></svg><svg style="left:329px;top:530px;" width="20" height="14" viewBox="0 0 20 14"><circle cx="5.5" cy="6.5" r="4.6" fill="#4e9a5c"/><path d="M5.5 4.3v4.4M4.3 4.3h2.4M4.3 8.7h2.4" stroke="#2b2b2b" stroke-width="1"/><path d="M12.5 13V3" stroke="#c75a2b" stroke-width="1.3"/><path d="M10.3 4.6L12.5 1.4 14.7 4.6z" fill="#c75a2b"/></svg><svg style="left:329px;top:1146px;" width="20" height="14" viewBox="0 0 20 14"><circle cx="5.5" cy="6.5" r="4.6" fill="#4e9a5c"/><path d="M5.5 4.3v4.4M4.3 4.3h2.4M4.3 8.7h2.4" stroke="#2b2b2b" stroke-width="1"/><path d="M12.5 13V3" stroke="#c75a2b" stroke-width="1.3"/><path d="M10.3 4.6L12.5 1.4 14.7 4.6z" fill="#c75a2b"/></svg><div class="t" style="left:347px;top:528px;color:#bbbbbb;font-size:13px">@</div><div class="t" style="left:442.73px;top:492.03px;font-family:'Liberation Sans',sans-serif;font-weight:bold;font-size:131px;line-height:150px;color:rgba(142,170,142,0.9);transform-origin:0 0;transform:scale(0.9682,0.9747)">X</div><div class="t" style="left:525.86px;top:491.29px;font-family:'Liberation Sans',sans-serif;font-weight:bold;font-size:131px;line-height:150px;color:rgba(142,170,142,0.9);transform-origin:0 0;transform:scale(0.9359,0.9894)">S</div><div class="t" style="left:607.17px;top:491.29px;font-family:'Liberation Sans',sans-serif;font-weight:bold;font-size:131px;line-height:150px;color:rgba(142,170,142,0.9);transform-origin:0 0;transform:scale(0.9564,0.9894)">S</div><div class="t" style="left:689.75px;top:504.00px;font-family:'Liberation Sans',sans-serif;font-weight:bold;font-size:131px;line-height:150px;color:rgba(142,170,142,0.9);transform-origin:0 0;transform:scale(0.9722,0.8750)">.</div><div class="t" style="left:756.92px;top:492.00px;font-family:'Liberation Sans',sans-serif;font-weight:bold;font-size:125px;line-height:150px;color:rgba(142,170,142,0.9);transform-origin:0 0;transform:scale(1.0169,1.0000)">s</div><div style="left:733px;top:520.5px;width:17px;height:16px;background:rgba(142,170,142,0.9)"></div><div style="left:733px;top:545px;width:17px;height:64px;background:rgba(142,170,142,0.9)"></div><div style="left:1008px;top:112px;width:8px;height:214px;background:rgba(110,112,114,0.45)"></div><div style="left:1003px;top:119px;width:14px;height:2px;background:#e8a33e"></div><div style="left:1003px;top:251px;width:14px;height:2px;background:#e8a33e"></div><div style="left:1003px;top:367px;width:14px;height:2px;background:#817c3a"></div><div style="left:1003px;top:484px;width:14px;height:2px;background:#e8a33e"></div><div style="left:1003px;top:507px;width:14px;height:2px;background:#817c3a"></div><div style="left:1003px;top:1253px;width:14px;height:2px;background:#e8a33e"></div><div style="left:999px;top:118px;width:2px;height:5px;background:#499c54"></div><div style="left:999px;top:334px;width:2px;height:4px;background:#499c54"></div><div style="left:999px;top:420px;width:2px;height:203px;background:#3a6e9c"></div><div style="left:999px;top:672px;width:2px;height:11px;background:#3a6e9c"></div><div style="left:999px;top:696px;width:2px;height:11px;background:#3a6e9c"></div><div style="left:999px;top:759px;width:2px;height:4px;background:#6e6e6e"></div><div style="left:999px;top:880px;width:2px;height:4px;background:#499c54"></div><div style="left:999px;top:914px;width:2px;height:4px;background:#499c54"></div><div style="left:999px;top:957px;width:2px;height:108px;background:#3a6e9c"></div><div style="left:383px;top:1339px;width:228px;height:8px;background:#4c4e50"></div><svg style="left:884px;top:92px;" width="12" height="11" viewBox="0 0 12 11"><path d="M6 0.5L11.5 10.5H0.5z" fill="#e8a33e"/><path d="M6 3.5v3.5M6 8.2v1.2" stroke="#2b2b2b" stroke-width="1.3"/></svg><div class="t" style="left:899px;top:90px;font-size:12px;color:#bbbbbb">27</div><svg style="left:919px;top:92px;" width="12" height="11" viewBox="0 0 12 11"><path d="M6 0.5L11.5 10.5H0.5z" fill="#817c3a"/><path d="M6 3.5v3.5M6 8.2v1.2" stroke="#2b2b2b" stroke-width="1.3"/></svg><div class="t" style="left:934px;top:90px;font-size:12px;color:#bbbbbb">2</div><svg style="left:948px;top:92px;" width="12" height="13" viewBox="0 0 12 13"><path d="M1 5l3.5 3.5L11 1.5" fill="none" stroke="#59a869" stroke-width="2.2"/><path d="M0.5 11.5l2-1.5 2 1.5 2-1.5 2 1.5 2-1.5" fill="none" stroke="#59a869" stroke-width="0.9"/></svg><div class="t" style="left:963px;top:90px;font-size:12px;color:#bbbbbb">7</div><svg style="left:980px;top:95px;" width="9" height="5" viewBox="0 0 9 5"><path d="M0.5 4.5L4.5 0.8 8.5 4.5" fill="none" stroke="#9a9da0" stroke-width="1.2"/></svg><svg style="left:1001px;top:96px;" width="9" height="5" viewBox="0 0 9 5"><path d="M0.5 0.5L4.5 4.2 8.5 0.5" fill="none" stroke="#9a9da0" stroke-width="1.2"/></svg></body></html>
